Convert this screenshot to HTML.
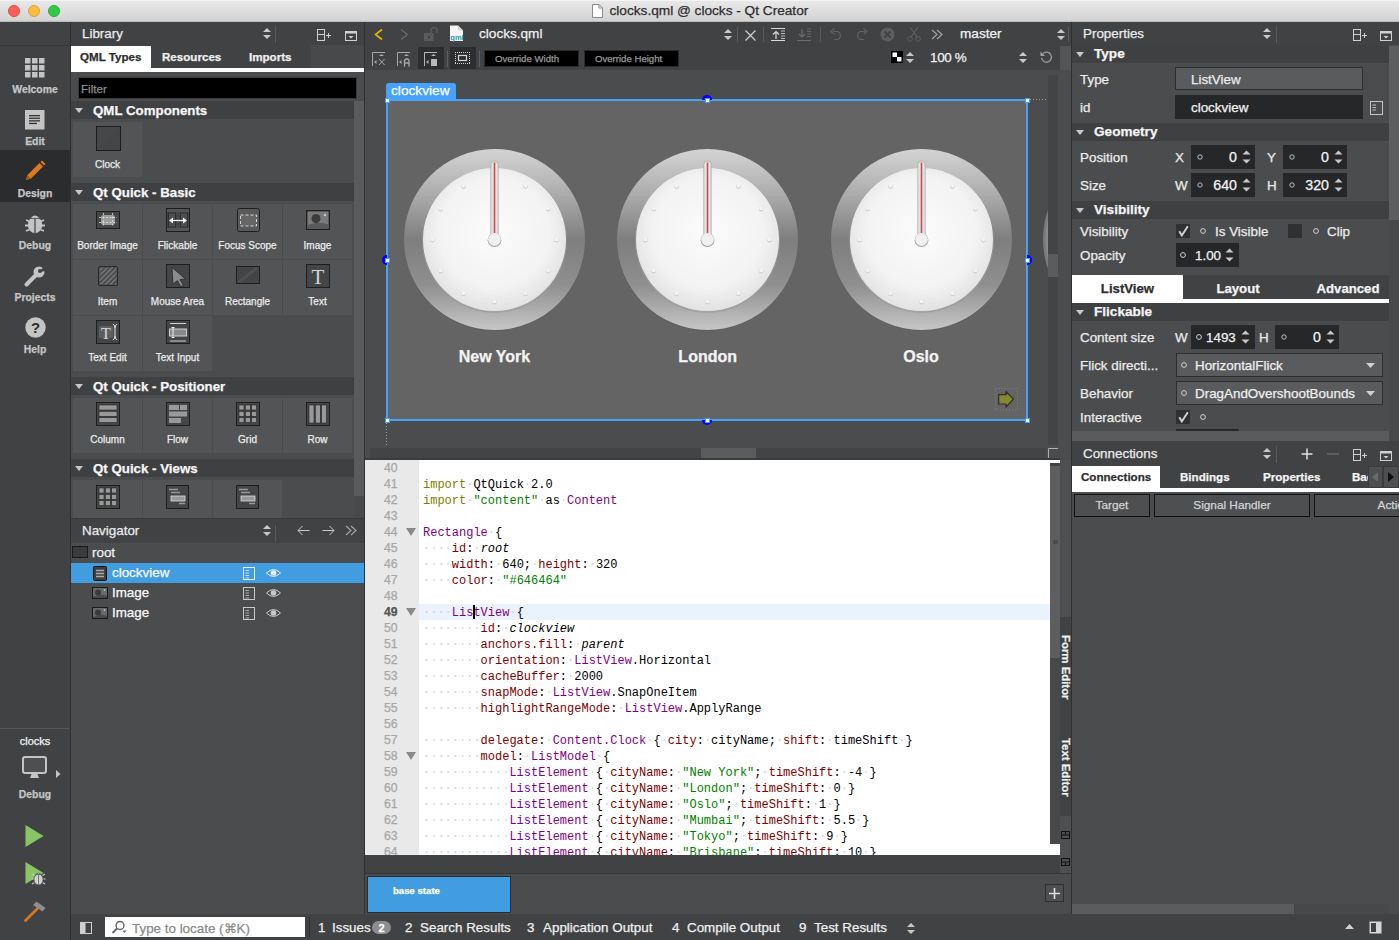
<!DOCTYPE html>
<html><head><meta charset="utf-8">
<style>
*{margin:0;padding:0;box-sizing:border-box}
html,body{width:1399px;height:940px;overflow:hidden;background:#4b4c4e;font-family:"Liberation Sans",sans-serif;color:#fff;position:relative}
.a{position:absolute}
.t{position:absolute;white-space:nowrap;line-height:1;-webkit-text-stroke:0.25px currentColor}
.mono{-webkit-text-stroke:0}
.mono{font-family:"Liberation Mono",monospace}
svg{overflow:visible}
</style></head><body>
<div class="a" style="left:0px;top:0px;width:1399px;height:22px;background:linear-gradient(#e9e9e9,#d2d2d2);"></div>
<div class="a" style="left:0px;top:0px;width:1399px;height:1px;background:#f4f4f4;"></div>
<div class="a" style="left:0px;top:21px;width:1399px;height:1px;background:#b9b9b9;"></div>
<div class="a" style="left:8px;top:5px;width:12px;height:12px;border-radius:50%;background:#fc605b;border:0.5px solid #e0443e"></div>
<div class="a" style="left:28px;top:5px;width:12px;height:12px;border-radius:50%;background:#fdbc40;border:0.5px solid #dea236"></div>
<div class="a" style="left:48px;top:5px;width:12px;height:12px;border-radius:50%;background:#34c84a;border:0.5px solid #27aa35"></div>
<svg class="a" style="left:592px;top:4px;" width="11" height="14" viewBox="0 0 11 14"><path d="M0.5 0.5h6.5l3.5 3.5v9.5h-10z" fill="#fff" stroke="#8a8a8a"/><path d="M7 0.5v3.5h3.5" fill="none" stroke="#8a8a8a"/></svg>
<div class="t" style="left:609.5px;top:4.40px;font-size:13.65px;color:#2c2c2c;font-weight:normal;">clocks.qml @ clocks - Qt Creator</div>
<div class="a" style="left:0px;top:22px;width:70px;height:918px;background:#404244;"></div>
<div class="a" style="left:70px;top:22px;width:1px;height:918px;background:#2f3032;"></div>
<div class="a" style="left:0px;top:45px;width:70px;height:1px;background:#353638;"></div>
<div class="a" style="left:0px;top:150px;width:70px;height:52px;background:#2b2c2e;"></div>
<svg class="a" style="left:25px;top:58px;" width="20" height="20" viewBox="0 0 20 20"><rect x="0" y="0" width="5.5" height="5.5" fill="#c4c4c4"/><rect x="7" y="0" width="5.5" height="5.5" fill="#c4c4c4"/><rect x="14" y="0" width="5.5" height="5.5" fill="#c4c4c4"/><rect x="0" y="7" width="5.5" height="5.5" fill="#c4c4c4"/><rect x="7" y="7" width="5.5" height="5.5" fill="#c4c4c4"/><rect x="14" y="7" width="5.5" height="5.5" fill="#c4c4c4"/><rect x="0" y="14" width="5.5" height="5.5" fill="#c4c4c4"/><rect x="7" y="14" width="5.5" height="5.5" fill="#c4c4c4"/><rect x="14" y="14" width="5.5" height="5.5" fill="#c4c4c4"/></svg>
<div class="t" style="left:-265px;width:600px;text-align:center;top:85.16px;font-size:10.4px;color:#c6c6c6;font-weight:bold;">Welcome</div>
<svg class="a" style="left:25px;top:110px;" width="20" height="20" viewBox="0 0 20 20"><rect x="0" y="0" width="19.5" height="19.5" fill="#c4c4c4"/><rect x="4" y="5.0" width="11" height="1.3" fill="#333"/><rect x="4" y="7.6" width="11" height="1.3" fill="#333"/><rect x="4" y="10.2" width="11" height="1.3" fill="#333"/><rect x="4" y="12.8" width="8" height="1.3" fill="#333"/></svg>
<div class="t" style="left:-265px;width:600px;text-align:center;top:137.16px;font-size:10.4px;color:#c6c6c6;font-weight:bold;">Edit</div>
<svg class="a" style="left:24px;top:160px;" width="22" height="22" viewBox="0 0 22 22"><path d="M2 20 L3.5 15 L15.5 3 L19 6.5 L7 18.5 Z" fill="#dd7a1b"/><path d="M16.5 2 L18 0.5 L21.5 4 L20 5.5 Z" fill="#dd7a1b"/><path d="M2 20 L3.5 15 L7 18.5Z" fill="#a85a10"/></svg>
<div class="t" style="left:-265px;width:600px;text-align:center;top:189.16px;font-size:10.4px;color:#c6c6c6;font-weight:bold;">Design</div>
<svg class="a" style="left:24px;top:212px;" width="22" height="22" viewBox="0 0 22 22"><path d="M2 8 L5.5 9.5 M1 13.5 L4.5 13.5 M2 19 L5.5 17.5 M20 8 L16.5 9.5 M21 13.5 L17.5 13.5 M20 19 L16.5 17.5" stroke="#c4c4c4" stroke-width="1.8"/><ellipse cx="11" cy="13" rx="7.2" ry="8.2" fill="#c4c4c4"/><path d="M6 6.5 Q11 -0.5 16 6.5Z" fill="#c4c4c4" stroke="#404244" stroke-width="0.8"/><line x1="11" y1="6.5" x2="11" y2="21.5" stroke="#404244" stroke-width="1.2"/></svg>
<div class="t" style="left:-265px;width:600px;text-align:center;top:241.16px;font-size:10.4px;color:#c6c6c6;font-weight:bold;">Debug</div>
<svg class="a" style="left:24px;top:265px;" width="22" height="22" viewBox="0 0 22 22"><path d="M2.5 19.5 L12 10" stroke="#c4c4c4" stroke-width="4" stroke-linecap="round"/><circle cx="15" cy="7" r="5.5" fill="#c4c4c4"/><path d="M15 7 L20 1.5 L22 6Z" fill="#404244"/><circle cx="16" cy="6" r="2" fill="#404244"/></svg>
<div class="t" style="left:-265px;width:600px;text-align:center;top:293.16px;font-size:10.4px;color:#c6c6c6;font-weight:bold;">Projects</div>
<svg class="a" style="left:25px;top:317px;" width="21" height="21" viewBox="0 0 21 21"><circle cx="10.5" cy="10.5" r="10.2" fill="#c4c4c4"/><text x="10.5" y="16" text-anchor="middle" font-family="Liberation Sans" font-weight="bold" font-size="15" fill="#2b2c2e">?</text></svg>
<div class="t" style="left:-265px;width:600px;text-align:center;top:345.16px;font-size:10.4px;color:#c6c6c6;font-weight:bold;">Help</div>
<div class="a" style="left:0px;top:728px;width:70px;height:1px;background:#555658;"></div>
<div class="t" style="left:-265px;width:600px;text-align:center;top:735.65px;font-size:11px;color:#f4f4f4;font-weight:normal;">clocks</div>
<svg class="a" style="left:22px;top:756px;" width="26" height="24" viewBox="0 0 26 24"><rect x="1" y="1" width="23" height="16" rx="2" fill="#4e4f51" stroke="#c4c4c4" stroke-width="2"/><path d="M10 17 L15 17 L17 22 L8 22Z" fill="#c4c4c4"/></svg>
<svg class="a" style="left:56px;top:770px;" width="5" height="8" viewBox="0 0 5 8"><path d="M0 0 L4.5 4 L0 8Z" fill="#c4c4c4"/></svg>
<div class="t" style="left:-265px;width:600px;text-align:center;top:790.16px;font-size:10.4px;color:#c6c6c6;font-weight:bold;">Debug</div>
<svg class="a" style="left:25px;top:825px;" width="19" height="22" viewBox="0 0 19 22"><path d="M0.5 0 L18.5 11 L0.5 22Z" fill="#8bc466"/></svg>
<svg class="a" style="left:25px;top:862px;" width="22" height="25" viewBox="0 0 22 25"><path d="M0.5 0 L18.5 11 L0.5 22Z" fill="#8bc466"/><path d="M9.5 13.5 L7 12 M9.5 17 L6.5 17 M9.5 20.5 L7 22 M17.5 13.5 L20 12 M17.5 17 L20.5 17 M17.5 20.5 L20 22" stroke="#c8c8c8" stroke-width="1.2"/><ellipse cx="13.5" cy="17.5" rx="4.6" ry="5.5" fill="#d0d0d0" stroke="#404244" stroke-width="0.8"/><path d="M10.5 12.5 Q13.5 9.5 16.5 12.5Z" fill="#d0d0d0" stroke="#404244" stroke-width="0.6"/><line x1="13.5" y1="13" x2="13.5" y2="23" stroke="#707070" stroke-width="0.9"/></svg>
<svg class="a" style="left:23px;top:900px;" width="24" height="23" viewBox="0 0 24 23"><path d="M2.5 20.5 L14 9" stroke="#d6781f" stroke-width="2.8" stroke-linecap="round"/><path d="M10 5 L13.5 1.5 L22.5 8 L19.5 11.5 Z" fill="#8e8e8e"/></svg>
<div class="a" style="left:71px;top:22px;width:293px;height:496px;background:#4b4c4e;"></div>
<div class="a" style="left:71px;top:22px;width:293px;height:23px;background:#404244;"></div>
<div class="t" style="left:82px;top:26.61px;font-size:13.4px;color:#ececec;font-weight:normal;">Library</div>
<svg class="a" style="left:263px;top:28px;" width="8" height="11" viewBox="0 0 8 11"><path d="M4 0 L8 4 L0 4Z M4 11 L8 7 L0 7Z" fill="#c8c8c8"/></svg>
<div class="a" style="left:275px;top:26px;width:1px;height:17px;background:#5a5b5d;"></div>
<svg class="a" style="left:317px;top:29px;" width="15" height="12" viewBox="0 0 15 12"><rect x="0.5" y="0.5" width="7" height="11" fill="none" stroke="#d0d0d0"/><line x1="0.5" y1="5.5" x2="7.5" y2="5.5" stroke="#d0d0d0"/><path d="M9 6.5 H14 M11.5 4 V9" stroke="#d0d0d0" stroke-width="1"/></svg>
<svg class="a" style="left:345px;top:31px;" width="12" height="10" viewBox="0 0 12 10"><rect x="0.5" y="0.5" width="11" height="9" fill="none" stroke="#d0d0d0"/><rect x="0.5" y="0.5" width="11" height="2" fill="#d0d0d0"/><path d="M3.5 5 L8.5 5 L6 7.5Z" fill="#d0d0d0"/></svg>
<div class="a" style="left:71px;top:45px;width:293px;height:23px;background:#404244;"></div>
<div class="a" style="left:71px;top:46px;width:80px;height:22px;background:#ffffff;"></div>
<div class="a" style="left:71px;top:68px;width:293px;height:4px;background:#ffffff;"></div>
<div class="a" style="left:311px;top:45px;width:53px;height:23px;background:#48494b;"></div>
<div class="t" style="left:80px;top:51.14px;font-size:11.6px;color:#2e2e2e;font-weight:bold;">QML Types</div>
<div class="t" style="left:162px;top:51.14px;font-size:11.6px;color:#f0f0f0;font-weight:bold;">Resources</div>
<div class="t" style="left:249px;top:51.14px;font-size:11.6px;color:#f0f0f0;font-weight:bold;">Imports</div>
<div class="a" style="left:71px;top:72px;width:293px;height:29px;background:#4b4c4e;"></div>
<div class="a" style="left:78px;top:77px;width:279px;height:22px;background:#000;border:1px solid #3a3a3a;"></div>
<div class="t" style="left:81px;top:83.14px;font-size:11.6px;color:#8f8f8f;font-weight:normal;">Filter</div>
<div class="a" style="left:354px;top:101px;width:10px;height:417px;background:#5a5b5d;"></div>
<div class="a" style="left:354px;top:496px;width:10px;height:22px;background:#48494b;"></div>
<div class="a" style="left:364px;top:22px;width:1px;height:918px;background:#2f3032;"></div>
<div class="a" style="left:71px;top:101px;width:283px;height:18px;background:#3f4042;"></div>
<svg class="a" style="left:75px;top:108px;" width="8" height="5" viewBox="0 0 8 5"><path d="M0 0 L8 0 L4.0 5Z" fill="#c8c8c8"/></svg>
<div class="t" style="left:93px;top:103.50px;font-size:13.3px;color:#f6f6f6;font-weight:bold;">QML Components</div>
<div class="a" style="left:71px;top:183px;width:283px;height:18px;background:#3f4042;"></div>
<svg class="a" style="left:75px;top:190px;" width="8" height="5" viewBox="0 0 8 5"><path d="M0 0 L8 0 L4.0 5Z" fill="#c8c8c8"/></svg>
<div class="t" style="left:93px;top:185.50px;font-size:13.3px;color:#f6f6f6;font-weight:bold;">Qt Quick - Basic</div>
<div class="a" style="left:71px;top:377px;width:283px;height:18px;background:#3f4042;"></div>
<svg class="a" style="left:75px;top:384px;" width="8" height="5" viewBox="0 0 8 5"><path d="M0 0 L8 0 L4.0 5Z" fill="#c8c8c8"/></svg>
<div class="t" style="left:93px;top:379.50px;font-size:13.3px;color:#f6f6f6;font-weight:bold;">Qt Quick - Positioner</div>
<div class="a" style="left:71px;top:459px;width:283px;height:18px;background:#3f4042;"></div>
<svg class="a" style="left:75px;top:466px;" width="8" height="5" viewBox="0 0 8 5"><path d="M0 0 L8 0 L4.0 5Z" fill="#c8c8c8"/></svg>
<div class="t" style="left:93px;top:461.50px;font-size:13.3px;color:#f6f6f6;font-weight:bold;">Qt Quick - Views</div>
<div class="a" style="left:73px;top:122px;width:69px;height:55px;background:#535456;"></div>
<svg class="a" style="left:96px;top:126px;" width="25" height="25" viewBox="0 0 25 25"><rect x="0.5" y="0.5" width="24" height="24" fill="#464749" stroke="#1c1c1c"/><path d="M1 24 L24 1 V24Z" fill="#444547"/></svg>
<div class="t" style="left:-192.5px;width:600px;text-align:center;top:159.50px;font-size:10px;color:#ececec;font-weight:normal;">Clock</div>
<div class="a" style="left:73px;top:204px;width:69px;height:55px;background:#535456;"></div>
<div class="t" style="left:-192.5px;width:600px;text-align:center;top:240.80px;font-size:10px;color:#ececec;font-weight:normal;">Border Image</div>
<div class="a" style="left:143px;top:204px;width:69px;height:55px;background:#535456;"></div>
<div class="t" style="left:-122.5px;width:600px;text-align:center;top:240.80px;font-size:10px;color:#ececec;font-weight:normal;">Flickable</div>
<div class="a" style="left:213px;top:204px;width:69px;height:55px;background:#535456;"></div>
<div class="t" style="left:-52.5px;width:600px;text-align:center;top:240.80px;font-size:10px;color:#ececec;font-weight:normal;">Focus Scope</div>
<div class="a" style="left:283px;top:204px;width:69px;height:55px;background:#535456;"></div>
<div class="t" style="left:17.5px;width:600px;text-align:center;top:240.80px;font-size:10px;color:#ececec;font-weight:normal;">Image</div>
<div class="a" style="left:73px;top:260px;width:69px;height:55px;background:#535456;"></div>
<div class="t" style="left:-192.5px;width:600px;text-align:center;top:296.80px;font-size:10px;color:#ececec;font-weight:normal;">Item</div>
<div class="a" style="left:143px;top:260px;width:69px;height:55px;background:#535456;"></div>
<div class="t" style="left:-122.5px;width:600px;text-align:center;top:296.80px;font-size:10px;color:#ececec;font-weight:normal;">Mouse Area</div>
<div class="a" style="left:213px;top:260px;width:69px;height:55px;background:#535456;"></div>
<div class="t" style="left:-52.5px;width:600px;text-align:center;top:296.80px;font-size:10px;color:#ececec;font-weight:normal;">Rectangle</div>
<div class="a" style="left:283px;top:260px;width:69px;height:55px;background:#535456;"></div>
<div class="t" style="left:17.5px;width:600px;text-align:center;top:296.80px;font-size:10px;color:#ececec;font-weight:normal;">Text</div>
<div class="a" style="left:73px;top:316px;width:69px;height:55px;background:#535456;"></div>
<div class="t" style="left:-192.5px;width:600px;text-align:center;top:352.80px;font-size:10px;color:#ececec;font-weight:normal;">Text Edit</div>
<div class="a" style="left:143px;top:316px;width:69px;height:55px;background:#535456;"></div>
<div class="t" style="left:-122.5px;width:600px;text-align:center;top:352.80px;font-size:10px;color:#ececec;font-weight:normal;">Text Input</div>
<svg class="a" style="left:96px;top:211px;" width="24" height="18" viewBox="0 0 24 18"><rect x="0.5" y="0.5" width="23" height="17" fill="#444547" stroke="#1e1e1e"/><rect x="5" y="4" width="14" height="10" rx="2.5" fill="#9c9c9c"/><path d="M3 6.5H21 M3 11.5H21 M7.5 2V16 M16.5 2V16" stroke="#e0e0e0" stroke-width="0.8" stroke-dasharray="2 1.5"/></svg>
<svg class="a" style="left:166px;top:208px;" width="24" height="24" viewBox="0 0 24 24"><rect x="0.5" y="0.5" width="23" height="23" fill="#444547" stroke="#1e1e1e"/><rect x="1" y="1" width="22" height="3" fill="#555"/><rect x="1" y="20" width="22" height="3" fill="#555"/><rect x="2.5" y="5" width="7" height="14" fill="#4e4f51" stroke="#2a2a2a" stroke-width="0.8"/><rect x="14.5" y="5" width="7" height="14" fill="#4e4f51" stroke="#2a2a2a" stroke-width="0.8"/><path d="M4.5 12.5H19.5" stroke="#f0f0f0" stroke-width="1.3"/><path d="M3 12.5 L7 9.5 L7 15.5Z M21 12.5 L17 9.5 L17 15.5Z" fill="#f0f0f0"/></svg>
<svg class="a" style="left:237px;top:208px;" width="23" height="24" viewBox="0 0 23 24"><rect x="0.5" y="0.5" width="22" height="23" rx="2" fill="#58595b" stroke="#1e1e1e"/><rect x="3.5" y="7" width="16" height="11" fill="#666" stroke="#d8d8d8" stroke-width="1" stroke-dasharray="3 2"/></svg>
<svg class="a" style="left:306px;top:210px;" width="24" height="20" viewBox="0 0 24 20"><rect x="0.5" y="0.5" width="23" height="19" fill="#3a3b3d" stroke="#1e1e1e"/><rect x="1.5" y="1.5" width="21" height="17" fill="#7a7a7a"/><circle cx="10" cy="8.5" r="4.5" fill="#3c3c3c"/><rect x="9.3" y="11" width="1.6" height="5" fill="#3c3c3c"/><path d="M1.5 15 Q12 11.5 22.5 14.5 V18.5 H1.5Z" fill="#5a5a5a"/><circle cx="19" cy="5" r="1.2" fill="#c8c8c8"/></svg>
<svg class="a" style="left:98px;top:266px;" width="20" height="20" viewBox="0 0 20 20"><defs><pattern id="hat" width="3.5" height="3.5" patternUnits="userSpaceOnUse" patternTransform="rotate(45)"><rect width="1.5" height="3.5" fill="#7a7a7a"/></pattern></defs><rect x="0.5" y="0.5" width="19" height="19" rx="1.5" fill="#4a4b4d" stroke="#2a2a2a"/><rect x="1.5" y="1.5" width="17" height="17" fill="url(#hat)"/></svg>
<svg class="a" style="left:166px;top:264px;" width="24" height="24" viewBox="0 0 24 24"><rect x="0.5" y="0.5" width="23" height="23" fill="#444547" stroke="#1e1e1e"/><path d="M6 3.5 L19.5 15 L14 15.5 L17.5 21.5 L14.5 22.5 L11.5 16.5 L7 20Z" fill="#8c8c8c" stroke="#2a2a2a" stroke-width="0.8"/></svg>
<svg class="a" style="left:236px;top:266px;" width="24" height="18" viewBox="0 0 24 18"><rect x="0.5" y="0.5" width="23" height="17" fill="#444547" stroke="#1e1e1e"/><path d="M3 16 L21 2" stroke="#4f5052" stroke-width="3"/></svg>
<svg class="a" style="left:306px;top:264px;" width="24" height="24" viewBox="0 0 24 24"><rect x="0.5" y="0.5" width="23" height="23" fill="#444547" stroke="#1e1e1e"/><text x="12" y="20" text-anchor="middle" font-family="Liberation Serif" font-size="21" fill="#d4d4d4">T</text></svg>
<svg class="a" style="left:96px;top:320px;" width="24" height="24" viewBox="0 0 24 24"><rect x="0.5" y="0.5" width="23" height="23" fill="#444547" stroke="#1e1e1e"/><rect x="3" y="6" width="14" height="12" fill="#5e5f61"/><text x="10" y="19" text-anchor="middle" font-family="Liberation Serif" font-size="16" fill="#d4d4d4">T</text><path d="M17 4 Q19 5.5 19 8 V16 Q19 18.5 17 20 M21 4 Q19 5.5 19 8 M19 16 Q19 18.5 21 20" stroke="#eee" fill="none" stroke-width="1"/></svg>
<svg class="a" style="left:166px;top:320px;" width="24" height="24" viewBox="0 0 24 24"><rect x="0.5" y="0.5" width="23" height="23" fill="#444547" stroke="#1e1e1e"/><path d="M4 3.5H20 M4 21H20" stroke="#cfcfcf" stroke-width="1"/><rect x="3.5" y="9" width="17" height="7" fill="#8a8a8a" stroke="#cfcfcf" stroke-width="1"/><path d="M7 7.5V17.5 M5.5 7.5H8.5 M5.5 17.5H8.5" stroke="#f0f0f0" stroke-width="1"/></svg>
<div class="a" style="left:73px;top:398px;width:69px;height:55px;background:#535456;"></div>
<div class="t" style="left:-192.5px;width:600px;text-align:center;top:434.80px;font-size:10px;color:#ececec;font-weight:normal;">Column</div>
<div class="a" style="left:143px;top:398px;width:69px;height:55px;background:#535456;"></div>
<div class="t" style="left:-122.5px;width:600px;text-align:center;top:434.80px;font-size:10px;color:#ececec;font-weight:normal;">Flow</div>
<div class="a" style="left:213px;top:398px;width:69px;height:55px;background:#535456;"></div>
<div class="t" style="left:-52.5px;width:600px;text-align:center;top:434.80px;font-size:10px;color:#ececec;font-weight:normal;">Grid</div>
<div class="a" style="left:283px;top:398px;width:69px;height:55px;background:#535456;"></div>
<div class="t" style="left:17.5px;width:600px;text-align:center;top:434.80px;font-size:10px;color:#ececec;font-weight:normal;">Row</div>
<svg class="a" style="left:96px;top:402px;" width="24" height="24" viewBox="0 0 24 24"><rect x="0.5" y="0.5" width="23" height="23" fill="#444547" stroke="#1e1e1e"/><rect x="3" y="3.0" width="18" height="5" fill="#999" stroke="#222" stroke-width="0.6"/><rect x="3" y="9.3" width="18" height="5" fill="#999" stroke="#222" stroke-width="0.6"/><rect x="3" y="15.6" width="18" height="5" fill="#999" stroke="#222" stroke-width="0.6"/></svg>
<svg class="a" style="left:166px;top:402px;" width="24" height="24" viewBox="0 0 24 24"><rect x="0.5" y="0.5" width="23" height="23" fill="#444547" stroke="#1e1e1e"/><rect x="3" y="3" width="10" height="5" fill="#999"/><rect x="14" y="3" width="7" height="5" fill="#999"/><rect x="3" y="9.5" width="18" height="5" fill="#999"/><rect x="3" y="16" width="12" height="5" fill="#999"/></svg>
<svg class="a" style="left:236px;top:402px;" width="24" height="24" viewBox="0 0 24 24"><rect x="0.5" y="0.5" width="23" height="23" fill="#444547" stroke="#1e1e1e"/><rect x="3.0" y="3.0" width="5" height="5" fill="#999" stroke="#222" stroke-width="0.6"/><rect x="9.3" y="3.0" width="5" height="5" fill="#999" stroke="#222" stroke-width="0.6"/><rect x="15.6" y="3.0" width="5" height="5" fill="#999" stroke="#222" stroke-width="0.6"/><rect x="3.0" y="9.3" width="5" height="5" fill="#999" stroke="#222" stroke-width="0.6"/><rect x="9.3" y="9.3" width="5" height="5" fill="#999" stroke="#222" stroke-width="0.6"/><rect x="15.6" y="9.3" width="5" height="5" fill="#999" stroke="#222" stroke-width="0.6"/><rect x="3.0" y="15.6" width="5" height="5" fill="#999" stroke="#222" stroke-width="0.6"/><rect x="9.3" y="15.6" width="5" height="5" fill="#999" stroke="#222" stroke-width="0.6"/><rect x="15.6" y="15.6" width="5" height="5" fill="#999" stroke="#222" stroke-width="0.6"/></svg>
<svg class="a" style="left:306px;top:402px;" width="24" height="24" viewBox="0 0 24 24"><rect x="0.5" y="0.5" width="23" height="23" fill="#444547" stroke="#1e1e1e"/><rect x="3.0" y="3" width="5" height="18" fill="#999" stroke="#222" stroke-width="0.6"/><rect x="9.3" y="3" width="5" height="18" fill="#999" stroke="#222" stroke-width="0.6"/><rect x="15.6" y="3" width="5" height="18" fill="#999" stroke="#222" stroke-width="0.6"/></svg>
<div class="a" style="left:73px;top:480px;width:69px;height:38px;background:#535456;"></div>
<div class="a" style="left:143px;top:480px;width:69px;height:38px;background:#535456;"></div>
<div class="a" style="left:213px;top:480px;width:69px;height:38px;background:#535456;"></div>
<svg class="a" style="left:96px;top:485px;" width="24" height="24" viewBox="0 0 24 24"><rect x="0.5" y="0.5" width="23" height="23" fill="#444547" stroke="#1e1e1e"/><rect x="3.0" y="3.0" width="5" height="5" fill="#999" stroke="#222" stroke-width="0.6"/><rect x="9.3" y="3.0" width="5" height="5" fill="#999" stroke="#222" stroke-width="0.6"/><rect x="15.6" y="3.0" width="5" height="5" fill="#999" stroke="#222" stroke-width="0.6"/><rect x="3.0" y="9.3" width="5" height="5" fill="#999" stroke="#222" stroke-width="0.6"/><rect x="9.3" y="9.3" width="5" height="5" fill="#999" stroke="#222" stroke-width="0.6"/><rect x="15.6" y="9.3" width="5" height="5" fill="#999" stroke="#222" stroke-width="0.6"/><rect x="3.0" y="15.6" width="5" height="5" fill="#999" stroke="#222" stroke-width="0.6"/><rect x="9.3" y="15.6" width="5" height="5" fill="#999" stroke="#222" stroke-width="0.6"/><rect x="15.6" y="15.6" width="5" height="5" fill="#999" stroke="#222" stroke-width="0.6"/></svg>
<svg class="a" style="left:166px;top:485px;" width="23" height="24" viewBox="0 0 23 24"><rect x="0.5" y="0.5" width="22" height="23" fill="#444547" stroke="#1e1e1e"/><path d="M3 4.5H12 M5 7.5H14 M13 18.5H19" stroke="#999" stroke-width="1.6"/><rect x="5" y="11" width="14" height="5" fill="#999" stroke="#ddd" stroke-width="0.8"/></svg>
<svg class="a" style="left:236px;top:485px;" width="23" height="24" viewBox="0 0 23 24"><rect x="0.5" y="0.5" width="22" height="23" fill="#444547" stroke="#1e1e1e"/><path d="M3 4.5H12 M5 7.5H14 M13 18.5H19" stroke="#999" stroke-width="1.6"/><rect x="5" y="11" width="14" height="5" fill="#999" stroke="#ddd" stroke-width="0.8"/></svg>
<div class="a" style="left:71px;top:518px;width:293px;height:396px;background:#4b4c4e;"></div>
<div class="a" style="left:71px;top:518px;width:293px;height:25px;background:#404244;"></div>
<div class="a" style="left:71px;top:518px;width:293px;height:1px;background:#38393b;"></div>
<div class="t" style="left:82px;top:524.11px;font-size:13.4px;color:#ececec;font-weight:normal;">Navigator</div>
<svg class="a" style="left:263px;top:525px;" width="8" height="11" viewBox="0 0 8 11"><path d="M4 0 L8 4 L0 4Z M4 11 L8 7 L0 7Z" fill="#c8c8c8"/></svg>
<div class="a" style="left:275px;top:525px;width:1px;height:17px;background:#5a5b5d;"></div>
<svg class="a" style="left:297px;top:525px;" width="13" height="11" viewBox="0 0 13 11"><path d="M12.5 5.5H1 M5.5 1 L1 5.5 L5.5 10" stroke="#c8c8c8" fill="none" stroke-width="1"/></svg>
<svg class="a" style="left:322px;top:525px;" width="13" height="11" viewBox="0 0 13 11"><path d="M0.5 5.5H12 M7.5 1 L12 5.5 L7.5 10" stroke="#c8c8c8" fill="none" stroke-width="1"/></svg>
<svg class="a" style="left:345px;top:526px;" width="15" height="10" viewBox="0 0 15 10"><path d="M1 9 L6 4.5 L1 0 M6 9 L11 4.5 L6 0" stroke="#a8a8a8" fill="none" stroke-width="1.1"/></svg>
<svg class="a" style="left:72px;top:546px;" width="16" height="12" viewBox="0 0 16 12"><rect x="0.5" y="0.5" width="15" height="11" fill="#3a3b3d" stroke="#1b1b1b"/></svg>
<div class="t" style="left:92px;top:545.81px;font-size:13.4px;color:#f0f0f0;font-weight:normal;">root</div>
<div class="a" style="left:71px;top:563px;width:293px;height:20px;background:#419ddf;"></div>
<svg class="a" style="left:93px;top:566px;" width="14" height="15" viewBox="0 0 14 15"><rect x="0.5" y="0.5" width="13" height="14" rx="1" fill="#3d3e40" stroke="#111"/><path d="M3 4.5H11 M3 7.5H11 M3 10.5H11" stroke="#aaa" stroke-width="1.4"/></svg>
<div class="t" style="left:112px;top:565.81px;font-size:13.4px;color:#fafafa;font-weight:normal;">clockview</div>
<svg class="a" style="left:243px;top:567px;" width="12" height="13" viewBox="0 0 12 13"><rect x="0.5" y="0.5" width="11" height="12" fill="none" stroke="#e6f1fb"/><path d="M2.5 3.5H6 M2.5 6H6 M2.5 8.5H6 M2.5 11H6" stroke="#e6f1fb" stroke-width="0.8"/></svg>
<svg class="a" style="left:266px;top:568px;" width="15" height="10" viewBox="0 0 15 10"><path d="M0.5 5 Q7.5 -2 14.5 5 Q7.5 12 0.5 5Z" fill="none" stroke="#e6f1fb" stroke-width="1"/><circle cx="7.5" cy="5" r="2.8" fill="#e6f1fb"/></svg>
<svg class="a" style="left:92px;top:587px;" width="16" height="12" viewBox="0 0 16 12"><rect x="0.5" y="0.5" width="15" height="11" fill="#6a6a6a" stroke="#1a1a1a"/><circle cx="6" cy="5.5" r="3" fill="#3a3a3a"/><path d="M1 10 Q8 6 15 9 V11 H1Z" fill="#4a4a4a"/><circle cx="12.5" cy="3" r="0.8" fill="#ddd"/></svg>
<div class="t" style="left:112px;top:585.81px;font-size:13.4px;color:#fafafa;font-weight:normal;">Image</div>
<svg class="a" style="left:243px;top:587px;" width="12" height="13" viewBox="0 0 12 13"><rect x="0.5" y="0.5" width="11" height="12" fill="none" stroke="#c8c8c8"/><path d="M2.5 3.5H6 M2.5 6H6 M2.5 8.5H6 M2.5 11H6" stroke="#c8c8c8" stroke-width="0.8"/></svg>
<svg class="a" style="left:266px;top:588px;" width="15" height="10" viewBox="0 0 15 10"><path d="M0.5 5 Q7.5 -2 14.5 5 Q7.5 12 0.5 5Z" fill="none" stroke="#c8c8c8" stroke-width="1"/><circle cx="7.5" cy="5" r="2.8" fill="#c8c8c8"/></svg>
<svg class="a" style="left:92px;top:607px;" width="16" height="12" viewBox="0 0 16 12"><rect x="0.5" y="0.5" width="15" height="11" fill="#6a6a6a" stroke="#1a1a1a"/><circle cx="6" cy="5.5" r="3" fill="#3a3a3a"/><path d="M1 10 Q8 6 15 9 V11 H1Z" fill="#4a4a4a"/><circle cx="12.5" cy="3" r="0.8" fill="#ddd"/></svg>
<div class="t" style="left:112px;top:605.81px;font-size:13.4px;color:#fafafa;font-weight:normal;">Image</div>
<svg class="a" style="left:243px;top:607px;" width="12" height="13" viewBox="0 0 12 13"><rect x="0.5" y="0.5" width="11" height="12" fill="none" stroke="#c8c8c8"/><path d="M2.5 3.5H6 M2.5 6H6 M2.5 8.5H6 M2.5 11H6" stroke="#c8c8c8" stroke-width="0.8"/></svg>
<svg class="a" style="left:266px;top:608px;" width="15" height="10" viewBox="0 0 15 10"><path d="M0.5 5 Q7.5 -2 14.5 5 Q7.5 12 0.5 5Z" fill="none" stroke="#c8c8c8" stroke-width="1"/><circle cx="7.5" cy="5" r="2.8" fill="#c8c8c8"/></svg>
<div class="a" style="left:365px;top:22px;width:706px;height:24px;background:#404244;"></div>
<svg class="a" style="left:374px;top:29px;" width="9" height="11" viewBox="0 0 9 11"><path d="M8 0.5 L1.5 5.5 L8 10.5" stroke="#e8b400" stroke-width="1.6" fill="none"/></svg>
<svg class="a" style="left:400px;top:29px;" width="9" height="11" viewBox="0 0 9 11"><path d="M1 0.5 L7.5 5.5 L1 10.5" stroke="#6a6a6a" stroke-width="1.3" fill="none"/></svg>
<svg class="a" style="left:424px;top:27px;" width="14" height="14" viewBox="0 0 14 14"><rect x="0" y="6" width="9.5" height="8" fill="#5a5b5d"/><path d="M7 6 V3.5 A3 3 0 0 1 13 3.5 V6" stroke="#5a5b5d" stroke-width="1.5" fill="none"/><rect x="4" y="9" width="2" height="2.5" fill="#404244"/></svg>
<svg class="a" style="left:449px;top:25px;" width="16" height="17" viewBox="0 0 16 17"><path d="M1 0.5 H9 L14 5.5 V16 H1Z" fill="#f4f4f4"/><path d="M9 0.5 V5.5 H14" fill="#d8d8d8"/><text x="8" y="15" text-anchor="middle" font-family="Liberation Sans" font-weight="bold" font-size="7.5" fill="#1e9bb0">qml</text></svg>
<div class="t" style="left:479px;top:26.94px;font-size:13.6px;color:#f2f2f2;font-weight:normal;">clocks.qml</div>
<svg class="a" style="left:724px;top:29px;" width="8" height="11" viewBox="0 0 8 11"><path d="M4 0 L8 4 L0 4Z M4 11 L8 7 L0 7Z" fill="#c8c8c8"/></svg>
<div class="a" style="left:737px;top:27px;width:1px;height:15px;background:#5a5b5d;"></div>
<svg class="a" style="left:745px;top:30px;" width="11" height="11" viewBox="0 0 11 11"><path d="M0.5 0.5 L10.5 10.5 M10.5 0.5 L0.5 10.5" stroke="#d0d0d0" stroke-width="1.2"/></svg>
<div class="a" style="left:763px;top:27px;width:1px;height:15px;background:#5a5b5d;"></div>
<svg class="a" style="left:771px;top:28px;" width="15" height="13" viewBox="0 0 15 13"><path d="M0 0.5H14 M0 12.5H14" stroke="#d8d8d8"/><path d="M5 11 V4 M2 6.5 L5 3.5 L8 6.5" stroke="#d8d8d8" fill="none" stroke-width="1.2"/><path d="M10 3H14 M10 5.5H14 M10 8H14 M10 10.5H14" stroke="#d8d8d8" stroke-width="0.8"/></svg>
<svg class="a" style="left:797px;top:28px;" width="15" height="13" viewBox="0 0 15 13"><path d="M0 12.5H14" stroke="#6e6e6e"/><path d="M5 1 V9 M2 6 L5 9 L8 6" stroke="#6e6e6e" fill="none" stroke-width="1.2"/><path d="M10 1H14 M10 3.5H14 M10 6H14 M10 8.5H14" stroke="#6e6e6e" stroke-width="0.8"/></svg>
<div class="a" style="left:820px;top:27px;width:1px;height:15px;background:#5a5b5d;"></div>
<svg class="a" style="left:830px;top:28px;" width="13" height="12" viewBox="0 0 13 12"><path d="M3 3.5 H8 A4.5 4.5 0 0 1 8 11.5 H4" stroke="#626262" fill="none" stroke-width="1.2"/><path d="M4.5 0.5 L1 3.5 L4.5 6.5" stroke="#626262" fill="none" stroke-width="1.2"/></svg>
<svg class="a" style="left:855px;top:28px;" width="13" height="12" viewBox="0 0 13 12"><path d="M10 3.5 H5 A4.5 4.5 0 0 0 5 11.5 H9" stroke="#626262" fill="none" stroke-width="1.2"/><path d="M8.5 0.5 L12 3.5 L8.5 6.5" stroke="#626262" fill="none" stroke-width="1.2"/></svg>
<svg class="a" style="left:880px;top:27px;" width="15" height="15" viewBox="0 0 15 15"><circle cx="7.5" cy="7.5" r="7" fill="#5e5e5e"/><path d="M4.5 4.5 L10.5 10.5 M10.5 4.5 L4.5 10.5" stroke="#404244" stroke-width="1.8"/></svg>
<svg class="a" style="left:907px;top:27px;" width="14" height="15" viewBox="0 0 14 15"><path d="M3 0 L10 10 M11 0 L4 10" stroke="#5e5e5e" stroke-width="1.2"/><circle cx="3" cy="12" r="2.3" fill="none" stroke="#5e5e5e"/><circle cx="11" cy="12" r="2.3" fill="none" stroke="#5e5e5e"/></svg>
<svg class="a" style="left:931px;top:30px;" width="15" height="10" viewBox="0 0 15 10"><path d="M1 9 L6 4.5 L1 0 M6 9 L11 4.5 L6 0" stroke="#a8a8a8" fill="none" stroke-width="1.1"/></svg>
<div class="t" style="left:960px;top:26.94px;font-size:13.6px;color:#f2f2f2;font-weight:normal;">master</div>
<svg class="a" style="left:1057px;top:29px;" width="8" height="11" viewBox="0 0 8 11"><path d="M4 0 L8 4 L0 4Z M4 11 L8 7 L0 7Z" fill="#c8c8c8"/></svg>
<div class="a" style="left:1068px;top:27px;width:1px;height:15px;background:#5a5b5d;"></div>
<div class="a" style="left:365px;top:46px;width:695px;height:24px;background:#404244;"></div>
<div class="a" style="left:1060px;top:46px;width:11px;height:24px;background:#545557;"></div>
<div class="a" style="left:418px;top:47px;width:26px;height:22px;background:#2d2e30;"></div>
<div class="a" style="left:450px;top:47px;width:26px;height:22px;background:#2d2e30;"></div>
<div class="a" style="left:447px;top:51px;width:1px;height:16px;background:#5e5f61;"></div>
<div class="a" style="left:479px;top:51px;width:1px;height:16px;background:#5e5f61;"></div>
<svg class="a" style="left:372px;top:52px;" width="14" height="15" viewBox="0 0 14 15"><path d="M0.5 14 V0.5 H13" stroke="#a8a8a8" fill="none"/><path d="M4.5 8 L2 10 L4.5 12Z" fill="#a8a8a8"/><path d="M9.5 2 L12 4 L7 4Z" fill="#a8a8a8"/><path d="M7 7 L12.5 13 M12.5 7 L7 13" stroke="#a8a8a8"/></svg>
<svg class="a" style="left:397px;top:52px;" width="14" height="15" viewBox="0 0 14 15"><path d="M0.5 14 V0.5 H13" stroke="#a8a8a8" fill="none"/><path d="M4.5 8 L2 10 L4.5 12Z" fill="#a8a8a8"/><path d="M9.5 2 L12 4 L7 4Z" fill="#a8a8a8"/><path d="M7.5 14.5 V9 Q7.5 7 9.75 7 Q12 7 12 9 V14.5 M7.5 11 H12" stroke="#a8a8a8" fill="none" stroke-width="1.3"/></svg>
<svg class="a" style="left:424px;top:52px;" width="14" height="15" viewBox="0 0 14 15"><path d="M0.5 14 V0.5 H13" stroke="#b8b8b8" fill="none"/><path d="M4.5 8 L2 10 L4.5 12Z" fill="#b8b8b8"/><path d="M9.5 2 L12 4 L7 4Z" fill="#b8b8b8"/><rect x="7" y="7" width="6" height="7" fill="#b8b8b8"/></svg>
<svg class="a" style="left:455px;top:52px;" width="15" height="12" viewBox="0 0 15 12"><rect x="0" y="0" width="1" height="1" fill="#d0d0d0"/><rect x="0" y="11" width="1" height="1" fill="#d0d0d0"/><rect x="2" y="0" width="1" height="1" fill="#d0d0d0"/><rect x="2" y="11" width="1" height="1" fill="#d0d0d0"/><rect x="4" y="0" width="1" height="1" fill="#d0d0d0"/><rect x="4" y="11" width="1" height="1" fill="#d0d0d0"/><rect x="6" y="0" width="1" height="1" fill="#d0d0d0"/><rect x="6" y="11" width="1" height="1" fill="#d0d0d0"/><rect x="8" y="0" width="1" height="1" fill="#d0d0d0"/><rect x="8" y="11" width="1" height="1" fill="#d0d0d0"/><rect x="10" y="0" width="1" height="1" fill="#d0d0d0"/><rect x="10" y="11" width="1" height="1" fill="#d0d0d0"/><rect x="12" y="0" width="1" height="1" fill="#d0d0d0"/><rect x="12" y="11" width="1" height="1" fill="#d0d0d0"/><rect x="14" y="0" width="1" height="1" fill="#d0d0d0"/><rect x="14" y="11" width="1" height="1" fill="#d0d0d0"/><rect x="0" y="2" width="1" height="1" fill="#d0d0d0"/><rect x="14" y="2" width="1" height="1" fill="#d0d0d0"/><rect x="0" y="4" width="1" height="1" fill="#d0d0d0"/><rect x="14" y="4" width="1" height="1" fill="#d0d0d0"/><rect x="0" y="6" width="1" height="1" fill="#d0d0d0"/><rect x="14" y="6" width="1" height="1" fill="#d0d0d0"/><rect x="0" y="8" width="1" height="1" fill="#d0d0d0"/><rect x="14" y="8" width="1" height="1" fill="#d0d0d0"/><rect x="0" y="10" width="1" height="1" fill="#d0d0d0"/><rect x="14" y="10" width="1" height="1" fill="#d0d0d0"/><rect x="3.5" y="3.5" width="8" height="5" fill="none" stroke="#d8d8d8" stroke-width="1.2"/></svg>
<div class="a" style="left:484px;top:50px;width:95px;height:17px;background:#000;border:1px solid #2a2a2a;"></div>
<div class="a" style="left:584px;top:50px;width:95px;height:17px;background:#000;border:1px solid #2a2a2a;"></div>
<div class="t" style="left:495px;top:53.84px;font-size:9.6px;color:#9a9a9a;font-weight:normal;">Override Width</div>
<div class="t" style="left:595px;top:53.84px;font-size:9.6px;color:#9a9a9a;font-weight:normal;">Override Height</div>
<svg class="a" style="left:891px;top:51px;" width="12" height="12" viewBox="0 0 12 12"><rect x="0" y="0" width="12" height="12" fill="#000"/><rect x="1.5" y="1.5" width="4.5" height="4.5" fill="#fff"/><rect x="6" y="6" width="4.5" height="4.5" fill="#fff"/></svg>
<svg class="a" style="left:906px;top:52px;" width="8" height="11" viewBox="0 0 8 11"><path d="M4 0 L8 4 L0 4Z M4 11 L8 7 L0 7Z" fill="#c8c8c8"/></svg>
<div class="t" style="left:930px;top:51.11px;font-size:13.4px;color:#f2f2f2;font-weight:normal;letter-spacing:-0.3px">100 %</div>
<svg class="a" style="left:1019px;top:52px;" width="8" height="11" viewBox="0 0 8 11"><path d="M4 0 L8 4 L0 4Z M4 11 L8 7 L0 7Z" fill="#c8c8c8"/></svg>
<svg class="a" style="left:1040px;top:51px;" width="12" height="12" viewBox="0 0 12 12"><path d="M3 2.5 A5 5 0 1 1 1.5 7" stroke="#a0a0a0" fill="none" stroke-width="1.3"/><path d="M0.5 0.5 L0.5 5 L5 5Z" fill="#a0a0a0"/></svg>
<div class="a" style="left:365px;top:70px;width:706px;height:390px;background:#4b4c4e;"></div>
<div class="a" style="left:1048px;top:75px;width:10px;height:370px;background:#434446;"></div>
<div class="a" style="left:1048px;top:254px;width:10px;height:23px;background:#5b5c5e;"></div>
<div class="a" style="left:370px;top:448px;width:676px;height:10px;background:#434446;"></div>
<div class="a" style="left:701px;top:448px;width:55px;height:10px;background:#5b5c5e;"></div>
<svg class="a" style="left:1048px;top:448px;" width="10" height="10" viewBox="0 0 10 10"><path d="M0.5 10 V0.5 H10" stroke="#b0b0b0" fill="none"/></svg>
<div class="a" style="left:365px;top:458px;width:695px;height:2px;background:#3a3b3d;"></div>
<div class="a" style="left:387px;top:100px;width:640px;height:320px;background:#646464;"></div>
<svg class="a" style="left:399.9px;top:145.0px;" width="189.0" height="189.0" viewBox="0 0 189.0 189.0"><defs>
<linearGradient id="bz" x1="0" y1="0" x2="0" y2="1">
<stop offset="0" stop-color="#d4d4d4"/><stop offset="0.25" stop-color="#acacac"/><stop offset="0.5" stop-color="#7e7e7e"/><stop offset="0.75" stop-color="#8f8f8f"/><stop offset="1" stop-color="#c6c6c6"/></linearGradient>
<radialGradient id="fc" cx="0.5" cy="0.45" r="0.55">
<stop offset="0" stop-color="#fbfbfb"/><stop offset="0.7" stop-color="#f3f3f3"/><stop offset="1" stop-color="#e2e2e2"/></radialGradient>
</defs>
<circle cx="94.5" cy="95.5" r="90.5" fill="#5a5a5a" opacity="0.5"/>
<circle cx="94.5" cy="94.5" r="90.5" fill="url(#bz)"/>
<circle cx="94.5" cy="95.5" r="72.5" fill="#9a9a9a" opacity="0.6"/>
<circle cx="94.5" cy="94.5" r="71.5" fill="url(#fc)"/>
<circle cx="125.50" cy="41.41" r="2.3" fill="#c4c4c4"/><circle cx="125.50" cy="40.81" r="2.1" fill="#f4f4f4"/><circle cx="148.19" cy="64.10" r="2.3" fill="#c4c4c4"/><circle cx="148.19" cy="63.50" r="2.1" fill="#f4f4f4"/><circle cx="156.50" cy="95.10" r="2.3" fill="#c4c4c4"/><circle cx="156.50" cy="94.50" r="2.1" fill="#f4f4f4"/><circle cx="148.19" cy="126.10" r="2.3" fill="#c4c4c4"/><circle cx="148.19" cy="125.50" r="2.1" fill="#f4f4f4"/><circle cx="125.50" cy="148.79" r="2.3" fill="#c4c4c4"/><circle cx="125.50" cy="148.19" r="2.1" fill="#f4f4f4"/><circle cx="94.50" cy="157.10" r="2.3" fill="#c4c4c4"/><circle cx="94.50" cy="156.50" r="2.1" fill="#f4f4f4"/><circle cx="63.50" cy="148.79" r="2.3" fill="#c4c4c4"/><circle cx="63.50" cy="148.19" r="2.1" fill="#f4f4f4"/><circle cx="40.81" cy="126.10" r="2.3" fill="#c4c4c4"/><circle cx="40.81" cy="125.50" r="2.1" fill="#f4f4f4"/><circle cx="32.50" cy="95.10" r="2.3" fill="#c4c4c4"/><circle cx="32.50" cy="94.50" r="2.1" fill="#f4f4f4"/><circle cx="40.81" cy="64.10" r="2.3" fill="#c4c4c4"/><circle cx="40.81" cy="63.50" r="2.1" fill="#f4f4f4"/><circle cx="63.50" cy="41.41" r="2.3" fill="#c4c4c4"/><circle cx="63.50" cy="40.81" r="2.1" fill="#f4f4f4"/>
<rect x="90.8" y="16.0" width="7.4" height="79" rx="3.5" fill="#e4e4e4" stroke="#a8a8a8" stroke-width="0.8"/>
<rect x="93.7" y="17.5" width="1.6" height="72" fill="#d04a55"/>
<circle cx="94.5" cy="95.2" r="6.9" fill="#a0a0a0"/><circle cx="94.5" cy="94.5" r="6.4" fill="#f0f0f0"/>
</svg>
<svg class="a" style="left:613.2px;top:145.0px;" width="189.0" height="189.0" viewBox="0 0 189.0 189.0"><defs>
<linearGradient id="bz" x1="0" y1="0" x2="0" y2="1">
<stop offset="0" stop-color="#d4d4d4"/><stop offset="0.25" stop-color="#acacac"/><stop offset="0.5" stop-color="#7e7e7e"/><stop offset="0.75" stop-color="#8f8f8f"/><stop offset="1" stop-color="#c6c6c6"/></linearGradient>
<radialGradient id="fc" cx="0.5" cy="0.45" r="0.55">
<stop offset="0" stop-color="#fbfbfb"/><stop offset="0.7" stop-color="#f3f3f3"/><stop offset="1" stop-color="#e2e2e2"/></radialGradient>
</defs>
<circle cx="94.5" cy="95.5" r="90.5" fill="#5a5a5a" opacity="0.5"/>
<circle cx="94.5" cy="94.5" r="90.5" fill="url(#bz)"/>
<circle cx="94.5" cy="95.5" r="72.5" fill="#9a9a9a" opacity="0.6"/>
<circle cx="94.5" cy="94.5" r="71.5" fill="url(#fc)"/>
<circle cx="125.50" cy="41.41" r="2.3" fill="#c4c4c4"/><circle cx="125.50" cy="40.81" r="2.1" fill="#f4f4f4"/><circle cx="148.19" cy="64.10" r="2.3" fill="#c4c4c4"/><circle cx="148.19" cy="63.50" r="2.1" fill="#f4f4f4"/><circle cx="156.50" cy="95.10" r="2.3" fill="#c4c4c4"/><circle cx="156.50" cy="94.50" r="2.1" fill="#f4f4f4"/><circle cx="148.19" cy="126.10" r="2.3" fill="#c4c4c4"/><circle cx="148.19" cy="125.50" r="2.1" fill="#f4f4f4"/><circle cx="125.50" cy="148.79" r="2.3" fill="#c4c4c4"/><circle cx="125.50" cy="148.19" r="2.1" fill="#f4f4f4"/><circle cx="94.50" cy="157.10" r="2.3" fill="#c4c4c4"/><circle cx="94.50" cy="156.50" r="2.1" fill="#f4f4f4"/><circle cx="63.50" cy="148.79" r="2.3" fill="#c4c4c4"/><circle cx="63.50" cy="148.19" r="2.1" fill="#f4f4f4"/><circle cx="40.81" cy="126.10" r="2.3" fill="#c4c4c4"/><circle cx="40.81" cy="125.50" r="2.1" fill="#f4f4f4"/><circle cx="32.50" cy="95.10" r="2.3" fill="#c4c4c4"/><circle cx="32.50" cy="94.50" r="2.1" fill="#f4f4f4"/><circle cx="40.81" cy="64.10" r="2.3" fill="#c4c4c4"/><circle cx="40.81" cy="63.50" r="2.1" fill="#f4f4f4"/><circle cx="63.50" cy="41.41" r="2.3" fill="#c4c4c4"/><circle cx="63.50" cy="40.81" r="2.1" fill="#f4f4f4"/>
<rect x="90.8" y="16.0" width="7.4" height="79" rx="3.5" fill="#e4e4e4" stroke="#a8a8a8" stroke-width="0.8"/>
<rect x="93.7" y="17.5" width="1.6" height="72" fill="#d04a55"/>
<circle cx="94.5" cy="95.2" r="6.9" fill="#a0a0a0"/><circle cx="94.5" cy="94.5" r="6.4" fill="#f0f0f0"/>
</svg>
<svg class="a" style="left:826.5px;top:145.0px;" width="189.0" height="189.0" viewBox="0 0 189.0 189.0"><defs>
<linearGradient id="bz" x1="0" y1="0" x2="0" y2="1">
<stop offset="0" stop-color="#d4d4d4"/><stop offset="0.25" stop-color="#acacac"/><stop offset="0.5" stop-color="#7e7e7e"/><stop offset="0.75" stop-color="#8f8f8f"/><stop offset="1" stop-color="#c6c6c6"/></linearGradient>
<radialGradient id="fc" cx="0.5" cy="0.45" r="0.55">
<stop offset="0" stop-color="#fbfbfb"/><stop offset="0.7" stop-color="#f3f3f3"/><stop offset="1" stop-color="#e2e2e2"/></radialGradient>
</defs>
<circle cx="94.5" cy="95.5" r="90.5" fill="#5a5a5a" opacity="0.5"/>
<circle cx="94.5" cy="94.5" r="90.5" fill="url(#bz)"/>
<circle cx="94.5" cy="95.5" r="72.5" fill="#9a9a9a" opacity="0.6"/>
<circle cx="94.5" cy="94.5" r="71.5" fill="url(#fc)"/>
<circle cx="125.50" cy="41.41" r="2.3" fill="#c4c4c4"/><circle cx="125.50" cy="40.81" r="2.1" fill="#f4f4f4"/><circle cx="148.19" cy="64.10" r="2.3" fill="#c4c4c4"/><circle cx="148.19" cy="63.50" r="2.1" fill="#f4f4f4"/><circle cx="156.50" cy="95.10" r="2.3" fill="#c4c4c4"/><circle cx="156.50" cy="94.50" r="2.1" fill="#f4f4f4"/><circle cx="148.19" cy="126.10" r="2.3" fill="#c4c4c4"/><circle cx="148.19" cy="125.50" r="2.1" fill="#f4f4f4"/><circle cx="125.50" cy="148.79" r="2.3" fill="#c4c4c4"/><circle cx="125.50" cy="148.19" r="2.1" fill="#f4f4f4"/><circle cx="94.50" cy="157.10" r="2.3" fill="#c4c4c4"/><circle cx="94.50" cy="156.50" r="2.1" fill="#f4f4f4"/><circle cx="63.50" cy="148.79" r="2.3" fill="#c4c4c4"/><circle cx="63.50" cy="148.19" r="2.1" fill="#f4f4f4"/><circle cx="40.81" cy="126.10" r="2.3" fill="#c4c4c4"/><circle cx="40.81" cy="125.50" r="2.1" fill="#f4f4f4"/><circle cx="32.50" cy="95.10" r="2.3" fill="#c4c4c4"/><circle cx="32.50" cy="94.50" r="2.1" fill="#f4f4f4"/><circle cx="40.81" cy="64.10" r="2.3" fill="#c4c4c4"/><circle cx="40.81" cy="63.50" r="2.1" fill="#f4f4f4"/><circle cx="63.50" cy="41.41" r="2.3" fill="#c4c4c4"/><circle cx="63.50" cy="40.81" r="2.1" fill="#f4f4f4"/>
<rect x="90.8" y="16.0" width="7.4" height="79" rx="3.5" fill="#e4e4e4" stroke="#a8a8a8" stroke-width="0.8"/>
<rect x="93.7" y="17.5" width="1.6" height="72" fill="#d04a55"/>
<circle cx="94.5" cy="95.2" r="6.9" fill="#a0a0a0"/><circle cx="94.5" cy="94.5" r="6.4" fill="#f0f0f0"/>
</svg>
<div class="t" style="left:194.39999999999998px;width:600px;text-align:center;top:349.40px;font-size:16px;color:#f4f4f4;font-weight:bold;">New York</div>
<div class="t" style="left:407.70000000000005px;width:600px;text-align:center;top:349.40px;font-size:16px;color:#f4f4f4;font-weight:bold;">London</div>
<div class="t" style="left:621.0px;width:600px;text-align:center;top:349.40px;font-size:16px;color:#f4f4f4;font-weight:bold;">Oslo</div>
<div class="a" style="left:1028px;top:140px;width:20px;height:200px;overflow:hidden">
<svg class="a" style="left:10.799999999999955px;top:5.0px" width="189" height="189"><circle cx="94.5" cy="94.5" r="90.5" fill="#7a7a7a"/><circle cx="94.5" cy="94.5" r="88" fill="#8a8a8a"/></svg>
</div>
<svg class="a" style="left:995px;top:388px;" width="24" height="23" viewBox="0 0 24 23"><rect x="0.5" y="0.5" width="22" height="21.5" fill="none" stroke="#8a8a8a" stroke-width="0.8" stroke-dasharray="1 2"/><path d="M3.7 6.7 H11 V3.5 L18.5 11.2 L11 19 V16 H3.7Z" fill="#84882f" stroke="#2e2e2e" stroke-width="1.2" stroke-linejoin="round"/></svg>
<div class="a" style="left:386px;top:99px;width:642px;height:2px;background:#47a2fc;"></div>
<div class="a" style="left:386px;top:419px;width:642px;height:2px;background:#47a2fc;"></div>
<div class="a" style="left:386px;top:99px;width:2px;height:322px;background:#47a2fc;"></div>
<div class="a" style="left:1026px;top:99px;width:2px;height:322px;background:#47a2fc;"></div>
<div class="a" style="left:386px;top:83px;width:70px;height:17px;background:#47a2fc;border-radius:3px 3px 0 0"></div>
<div class="t" style="left:391px;top:84.36px;font-size:13.7px;color:#ffffff;font-weight:normal;">clockview</div>
<svg class="a" style="left:702px;top:95px;" width="10" height="5" viewBox="0 0 10 5"><path d="M0 5 A5 5 0 0 1 10 5Z" fill="#0000ff"/></svg>
<svg class="a" style="left:702px;top:420px;" width="10" height="5" viewBox="0 0 10 5"><path d="M0 0 A5 5 0 0 0 10 0Z" fill="#0000ff"/></svg>
<svg class="a" style="left:382px;top:255px;" width="5" height="10" viewBox="0 0 5 10"><path d="M5 0 A5 5 0 0 0 5 10Z" fill="#0000ff"/></svg>
<svg class="a" style="left:1027px;top:255px;" width="5" height="10" viewBox="0 0 5 10"><path d="M0 0 A5 5 0 0 1 0 10Z" fill="#0000ff"/></svg>
<div class="a" style="left:384.5px;top:97.5px;width:5px;height:5px;background:#ffffff;border:1px solid #47a2fc;"></div>
<div class="a" style="left:704.5px;top:97.5px;width:5px;height:5px;background:#ffffff;border:1px solid #47a2fc;"></div>
<div class="a" style="left:1024.5px;top:97.5px;width:5px;height:5px;background:#ffffff;border:1px solid #47a2fc;"></div>
<div class="a" style="left:384.5px;top:257.5px;width:5px;height:5px;background:#ffffff;border:1px solid #47a2fc;"></div>
<div class="a" style="left:1024.5px;top:257.5px;width:5px;height:5px;background:#ffffff;border:1px solid #47a2fc;"></div>
<div class="a" style="left:384.5px;top:417.5px;width:5px;height:5px;background:#ffffff;border:1px solid #47a2fc;"></div>
<div class="a" style="left:704.5px;top:417.5px;width:5px;height:5px;background:#ffffff;border:1px solid #47a2fc;"></div>
<div class="a" style="left:1024.5px;top:417.5px;width:5px;height:5px;background:#ffffff;border:1px solid #47a2fc;"></div>
<svg class="a" style="left:1030px;top:99px;" width="16" height="2" viewBox="0 0 16 2"><line x1="0" y1="0.5" x2="16" y2="0.5" stroke="#9a9a9a" stroke-dasharray="1 2"/></svg>
<svg class="a" style="left:386px;top:423px;" width="2" height="24" viewBox="0 0 2 24"><line x1="0.5" y1="0" x2="0.5" y2="24" stroke="#9a9a9a" stroke-dasharray="1 2"/></svg>
<div class="a" style="left:365px;top:460px;width:685px;height:395px;background:#ffffff;"></div>
<div class="a" style="left:365px;top:460px;width:54px;height:395px;background:#e9e9e9;"></div>
<div class="a" style="left:419px;top:604px;width:631px;height:16px;background:#e9f2fd;"></div>
<div class="a" style="left:1050px;top:463px;width:10px;height:392px;background:#47484a;"></div>
<div class="a" style="left:1050px;top:463px;width:10px;height:195px;background:#5d5e60;"></div>
<div class="a" style="left:1053px;top:540px;width:5px;height:4px;background:#4a4b4d;"></div>
<div class="a" style="left:1050px;top:463px;width:10px;height:3px;background:#404244;"></div>
<div class="a" style="left:1060px;top:460px;width:11px;height:455px;background:#4e4f51;"></div>
<div class="a" style="left:1060px;top:617px;width:11px;height:199px;background:#404244;"></div>
<div class="a" style="left:1050px;top:844px;width:10px;height:11px;background:#ffffff;"></div>
<div class="a" style="left:1050px;top:460px;width:10px;height:3px;background:#ffffff;"></div>
<div class="t" style="left:1071px;top:635px;transform-origin:0 0;transform:rotate(90deg);font-size:11.4px;font-weight:bold;color:#f0f0f0">Form Editor</div>
<div class="t" style="left:1071px;top:738px;transform-origin:0 0;transform:rotate(90deg);font-size:11.4px;font-weight:bold;color:#f0f0f0">Text Editor</div>
<svg class="a" style="left:1061px;top:831px;" width="9" height="8" viewBox="0 0 9 8"><rect x="0.5" y="0.5" width="8" height="7" fill="none" stroke="#111"/><path d="M0.5 4H8.5 M4.5 0.5V4" stroke="#111"/></svg>
<svg class="a" style="left:1061px;top:858px;" width="9" height="8" viewBox="0 0 9 8"><rect x="0.5" y="0.5" width="8" height="7" fill="none" stroke="#111"/><path d="M0.5 4H8.5 M4.5 4V7.5" stroke="#111"/></svg>
<div class="a" style="left:365px;top:460px;width:685px;height:395px;overflow:hidden">
<div class="t" style="left:0px;width:32.5px;text-align:right;top:1.63px;font-size:12.2px;color:#a6a6a6;font-weight:normal">40</div>
<div class="t" style="left:0px;width:32.5px;text-align:right;top:17.63px;font-size:12.2px;color:#a6a6a6;font-weight:normal">41</div>
<div class="t mono" style="left:58px;top:18.88px;font-size:12px;"><span style="color:#808000;">import</span><span style="color:#d2d2d2">·</span><span style="color:#000000;">QtQuick</span><span style="color:#d2d2d2">·</span><span style="color:#000000;">2.0</span></div>
<div class="t" style="left:0px;width:32.5px;text-align:right;top:33.63px;font-size:12.2px;color:#a6a6a6;font-weight:normal">42</div>
<div class="t mono" style="left:58px;top:34.88px;font-size:12px;"><span style="color:#808000;">import</span><span style="color:#d2d2d2">·</span><span style="color:#008000;">"content"</span><span style="color:#d2d2d2">·</span><span style="color:#000000;">as</span><span style="color:#d2d2d2">·</span><span style="color:#800080;">Content</span></div>
<div class="t" style="left:0px;width:32.5px;text-align:right;top:49.63px;font-size:12.2px;color:#a6a6a6;font-weight:normal">43</div>
<div class="t" style="left:0px;width:32.5px;text-align:right;top:65.63px;font-size:12.2px;color:#a6a6a6;font-weight:normal">44</div>
<div class="t mono" style="left:58px;top:66.88px;font-size:12px;"><span style="color:#800080;">Rectangle</span><span style="color:#d2d2d2">·</span><span style="color:#000000;">{</span></div>
<div class="t" style="left:0px;width:32.5px;text-align:right;top:81.63px;font-size:12.2px;color:#a6a6a6;font-weight:normal">45</div>
<div class="t mono" style="left:58px;top:82.88px;font-size:12px;"><span style="color:#d2d2d2">····</span><span style="color:#800000;">id</span><span style="color:#000000;">:</span><span style="color:#d2d2d2">·</span><span style="color:#000000;font-style:italic;">root</span></div>
<div class="t" style="left:0px;width:32.5px;text-align:right;top:97.63px;font-size:12.2px;color:#a6a6a6;font-weight:normal">46</div>
<div class="t mono" style="left:58px;top:98.88px;font-size:12px;"><span style="color:#d2d2d2">····</span><span style="color:#800000;">width</span><span style="color:#000000;">:</span><span style="color:#d2d2d2">·</span><span style="color:#000000;">640</span><span style="color:#000000;">;</span><span style="color:#d2d2d2">·</span><span style="color:#800000;">height</span><span style="color:#000000;">:</span><span style="color:#d2d2d2">·</span><span style="color:#000000;">320</span></div>
<div class="t" style="left:0px;width:32.5px;text-align:right;top:113.63px;font-size:12.2px;color:#a6a6a6;font-weight:normal">47</div>
<div class="t mono" style="left:58px;top:114.88px;font-size:12px;"><span style="color:#d2d2d2">····</span><span style="color:#800000;">color</span><span style="color:#000000;">:</span><span style="color:#d2d2d2">·</span><span style="color:#008000;">"#646464"</span></div>
<div class="t" style="left:0px;width:32.5px;text-align:right;top:129.63px;font-size:12.2px;color:#a6a6a6;font-weight:normal">48</div>
<div class="t" style="left:0px;width:32.5px;text-align:right;top:145.63px;font-size:12.2px;color:#555555;font-weight:bold">49</div>
<div class="t mono" style="left:58px;top:146.88px;font-size:12px;"><span style="color:#d2d2d2">····</span><span style="color:#800080;">ListView</span><span style="color:#d2d2d2">·</span><span style="color:#000000;">{</span></div>
<div class="t" style="left:0px;width:32.5px;text-align:right;top:161.63px;font-size:12.2px;color:#a6a6a6;font-weight:normal">50</div>
<div class="t mono" style="left:58px;top:162.88px;font-size:12px;"><span style="color:#d2d2d2">········</span><span style="color:#800000;">id</span><span style="color:#000000;">:</span><span style="color:#d2d2d2">·</span><span style="color:#000000;font-style:italic;">clockview</span></div>
<div class="t" style="left:0px;width:32.5px;text-align:right;top:177.63px;font-size:12.2px;color:#a6a6a6;font-weight:normal">51</div>
<div class="t mono" style="left:58px;top:178.88px;font-size:12px;"><span style="color:#d2d2d2">········</span><span style="color:#800000;">anchors.fill</span><span style="color:#000000;">:</span><span style="color:#d2d2d2">·</span><span style="color:#000000;font-style:italic;">parent</span></div>
<div class="t" style="left:0px;width:32.5px;text-align:right;top:193.63px;font-size:12.2px;color:#a6a6a6;font-weight:normal">52</div>
<div class="t mono" style="left:58px;top:194.88px;font-size:12px;"><span style="color:#d2d2d2">········</span><span style="color:#800000;">orientation</span><span style="color:#000000;">:</span><span style="color:#d2d2d2">·</span><span style="color:#800080;">ListView</span><span style="color:#000000;">.Horizontal</span></div>
<div class="t" style="left:0px;width:32.5px;text-align:right;top:209.63px;font-size:12.2px;color:#a6a6a6;font-weight:normal">53</div>
<div class="t mono" style="left:58px;top:210.88px;font-size:12px;"><span style="color:#d2d2d2">········</span><span style="color:#800000;">cacheBuffer</span><span style="color:#000000;">:</span><span style="color:#d2d2d2">·</span><span style="color:#000000;">2000</span></div>
<div class="t" style="left:0px;width:32.5px;text-align:right;top:225.63px;font-size:12.2px;color:#a6a6a6;font-weight:normal">54</div>
<div class="t mono" style="left:58px;top:226.88px;font-size:12px;"><span style="color:#d2d2d2">········</span><span style="color:#800000;">snapMode</span><span style="color:#000000;">:</span><span style="color:#d2d2d2">·</span><span style="color:#800080;">ListView</span><span style="color:#000000;">.SnapOneItem</span></div>
<div class="t" style="left:0px;width:32.5px;text-align:right;top:241.63px;font-size:12.2px;color:#a6a6a6;font-weight:normal">55</div>
<div class="t mono" style="left:58px;top:242.88px;font-size:12px;"><span style="color:#d2d2d2">········</span><span style="color:#800000;">highlightRangeMode</span><span style="color:#000000;">:</span><span style="color:#d2d2d2">·</span><span style="color:#800080;">ListView</span><span style="color:#000000;">.ApplyRange</span></div>
<div class="t" style="left:0px;width:32.5px;text-align:right;top:257.63px;font-size:12.2px;color:#a6a6a6;font-weight:normal">56</div>
<div class="t" style="left:0px;width:32.5px;text-align:right;top:273.63px;font-size:12.2px;color:#a6a6a6;font-weight:normal">57</div>
<div class="t mono" style="left:58px;top:274.88px;font-size:12px;"><span style="color:#d2d2d2">········</span><span style="color:#800000;">delegate</span><span style="color:#000000;">:</span><span style="color:#d2d2d2">·</span><span style="color:#800080;">Content.Clock</span><span style="color:#d2d2d2">·</span><span style="color:#000000;">{</span><span style="color:#d2d2d2">·</span><span style="color:#800000;">city</span><span style="color:#000000;">:</span><span style="color:#d2d2d2">·</span><span style="color:#000000;">cityName</span><span style="color:#000000;">;</span><span style="color:#d2d2d2">·</span><span style="color:#800000;">shift</span><span style="color:#000000;">:</span><span style="color:#d2d2d2">·</span><span style="color:#000000;">timeShift</span><span style="color:#d2d2d2">·</span><span style="color:#000000;">}</span></div>
<div class="t" style="left:0px;width:32.5px;text-align:right;top:289.63px;font-size:12.2px;color:#a6a6a6;font-weight:normal">58</div>
<div class="t mono" style="left:58px;top:290.88px;font-size:12px;"><span style="color:#d2d2d2">········</span><span style="color:#800000;">model</span><span style="color:#000000;">:</span><span style="color:#d2d2d2">·</span><span style="color:#800080;">ListModel</span><span style="color:#d2d2d2">·</span><span style="color:#000000;">{</span></div>
<div class="t" style="left:0px;width:32.5px;text-align:right;top:305.63px;font-size:12.2px;color:#a6a6a6;font-weight:normal">59</div>
<div class="t mono" style="left:58px;top:306.88px;font-size:12px;"><span style="color:#d2d2d2">············</span><span style="color:#800080;">ListElement</span><span style="color:#d2d2d2">·</span><span style="color:#000000;">{</span><span style="color:#d2d2d2">·</span><span style="color:#800000;">cityName</span><span style="color:#000000;">:</span><span style="color:#d2d2d2">·</span><span style="color:#008000;">"New York"</span><span style="color:#000000;">;</span><span style="color:#d2d2d2">·</span><span style="color:#800000;">timeShift</span><span style="color:#000000;">:</span><span style="color:#d2d2d2">·</span><span style="color:#000000;">-4</span><span style="color:#d2d2d2">·</span><span style="color:#000000;">}</span></div>
<div class="t" style="left:0px;width:32.5px;text-align:right;top:321.63px;font-size:12.2px;color:#a6a6a6;font-weight:normal">60</div>
<div class="t mono" style="left:58px;top:322.88px;font-size:12px;"><span style="color:#d2d2d2">············</span><span style="color:#800080;">ListElement</span><span style="color:#d2d2d2">·</span><span style="color:#000000;">{</span><span style="color:#d2d2d2">·</span><span style="color:#800000;">cityName</span><span style="color:#000000;">:</span><span style="color:#d2d2d2">·</span><span style="color:#008000;">"London"</span><span style="color:#000000;">;</span><span style="color:#d2d2d2">·</span><span style="color:#800000;">timeShift</span><span style="color:#000000;">:</span><span style="color:#d2d2d2">·</span><span style="color:#000000;">0</span><span style="color:#d2d2d2">·</span><span style="color:#000000;">}</span></div>
<div class="t" style="left:0px;width:32.5px;text-align:right;top:337.63px;font-size:12.2px;color:#a6a6a6;font-weight:normal">61</div>
<div class="t mono" style="left:58px;top:338.88px;font-size:12px;"><span style="color:#d2d2d2">············</span><span style="color:#800080;">ListElement</span><span style="color:#d2d2d2">·</span><span style="color:#000000;">{</span><span style="color:#d2d2d2">·</span><span style="color:#800000;">cityName</span><span style="color:#000000;">:</span><span style="color:#d2d2d2">·</span><span style="color:#008000;">"Oslo"</span><span style="color:#000000;">;</span><span style="color:#d2d2d2">·</span><span style="color:#800000;">timeShift</span><span style="color:#000000;">:</span><span style="color:#d2d2d2">·</span><span style="color:#000000;">1</span><span style="color:#d2d2d2">·</span><span style="color:#000000;">}</span></div>
<div class="t" style="left:0px;width:32.5px;text-align:right;top:353.63px;font-size:12.2px;color:#a6a6a6;font-weight:normal">62</div>
<div class="t mono" style="left:58px;top:354.88px;font-size:12px;"><span style="color:#d2d2d2">············</span><span style="color:#800080;">ListElement</span><span style="color:#d2d2d2">·</span><span style="color:#000000;">{</span><span style="color:#d2d2d2">·</span><span style="color:#800000;">cityName</span><span style="color:#000000;">:</span><span style="color:#d2d2d2">·</span><span style="color:#008000;">"Mumbai"</span><span style="color:#000000;">;</span><span style="color:#d2d2d2">·</span><span style="color:#800000;">timeShift</span><span style="color:#000000;">:</span><span style="color:#d2d2d2">·</span><span style="color:#000000;">5.5</span><span style="color:#d2d2d2">·</span><span style="color:#000000;">}</span></div>
<div class="t" style="left:0px;width:32.5px;text-align:right;top:369.63px;font-size:12.2px;color:#a6a6a6;font-weight:normal">63</div>
<div class="t mono" style="left:58px;top:370.88px;font-size:12px;"><span style="color:#d2d2d2">············</span><span style="color:#800080;">ListElement</span><span style="color:#d2d2d2">·</span><span style="color:#000000;">{</span><span style="color:#d2d2d2">·</span><span style="color:#800000;">cityName</span><span style="color:#000000;">:</span><span style="color:#d2d2d2">·</span><span style="color:#008000;">"Tokyo"</span><span style="color:#000000;">;</span><span style="color:#d2d2d2">·</span><span style="color:#800000;">timeShift</span><span style="color:#000000;">:</span><span style="color:#d2d2d2">·</span><span style="color:#000000;">9</span><span style="color:#d2d2d2">·</span><span style="color:#000000;">}</span></div>
<div class="t" style="left:0px;width:32.5px;text-align:right;top:385.63px;font-size:12.2px;color:#a6a6a6;font-weight:normal">64</div>
<div class="t mono" style="left:58px;top:386.88px;font-size:12px;"><span style="color:#d2d2d2">············</span><span style="color:#800080;">ListElement</span><span style="color:#d2d2d2">·</span><span style="color:#000000;">{</span><span style="color:#d2d2d2">·</span><span style="color:#800000;">cityName</span><span style="color:#000000;">:</span><span style="color:#d2d2d2">·</span><span style="color:#008000;">"Brisbane"</span><span style="color:#000000;">;</span><span style="color:#d2d2d2">·</span><span style="color:#800000;">timeShift</span><span style="color:#000000;">:</span><span style="color:#d2d2d2">·</span><span style="color:#000000;">10</span><span style="color:#d2d2d2">·</span><span style="color:#000000;">}</span></div>
<svg class="a" style="left:41px;top:68px" width="10" height="8"><path d="M0 0 L10 0 L5 8Z" fill="#8a8a8a"/></svg>
<svg class="a" style="left:41px;top:148px" width="10" height="8"><path d="M0 0 L10 0 L5 8Z" fill="#8a8a8a"/></svg>
<svg class="a" style="left:41px;top:292px" width="10" height="8"><path d="M0 0 L10 0 L5 8Z" fill="#8a8a8a"/></svg>
</div>
<div class="a" style="left:473px;top:605px;width:1.5px;height:14px;background:#000;"></div>
<div class="a" style="left:365px;top:873px;width:706px;height:41px;background:#4b4c4e;"></div>
<div class="a" style="left:365px;top:855px;width:695px;height:18px;background:#404244;"></div>
<div class="a" style="left:365px;top:873px;width:706px;height:1px;background:#353638;"></div>
<div class="a" style="left:367px;top:876px;width:144px;height:37px;background:#419ddf;border:1px solid #2a2b2d;"></div>
<div class="t" style="left:393px;top:885.84px;font-size:9.6px;color:#ffffff;font-weight:bold;">base state</div>
<div class="a" style="left:1045px;top:884px;width:19px;height:18px;background:#4e4f51;border:1px solid #2e2f31;"></div>
<svg class="a" style="left:1048px;top:887px;" width="13" height="13" viewBox="0 0 13 13"><path d="M6.5 1V12 M1 6.5H12" stroke="#e0e0e0" stroke-width="1.6"/></svg>
<div class="a" style="left:71px;top:914px;width:1328px;height:26px;background:#404244;"></div>
<svg class="a" style="left:80px;top:922px;" width="12" height="12" viewBox="0 0 12 12"><rect x="0.5" y="0.5" width="11" height="11" fill="none" stroke="#d0d0d0"/><rect x="0.5" y="0.5" width="5" height="11" fill="#d0d0d0"/></svg>
<div class="a" style="left:105px;top:917px;width:200px;height:20px;background:#ffffff;"></div>
<svg class="a" style="left:111px;top:920px;" width="16" height="14" viewBox="0 0 16 14"><circle cx="9" cy="5.5" r="4" fill="none" stroke="#666" stroke-width="1.4"/><path d="M6 8.5 L1.5 13" stroke="#666" stroke-width="1.8"/><path d="M11.5 10.5 L15.5 10.5 L13.5 13Z" fill="#666"/></svg>
<div class="t" style="left:132px;top:921.61px;font-size:13.4px;color:#8a8a8a;font-weight:normal;">Type to locate (⌘K)</div>
<div class="a" style="left:309px;top:917px;width:1px;height:20px;background:#2e2f31;"></div>
<div class="t" style="left:318px;top:921.11px;font-size:13.4px;color:#f0f0f0;font-weight:normal;">1</div>
<div class="t" style="left:332px;top:921.11px;font-size:13.4px;color:#f0f0f0;font-weight:normal;">Issues</div>
<div class="t" style="left:405px;top:921.11px;font-size:13.4px;color:#f0f0f0;font-weight:normal;">2</div>
<div class="t" style="left:420px;top:921.11px;font-size:13.4px;color:#f0f0f0;font-weight:normal;">Search Results</div>
<div class="t" style="left:527px;top:921.11px;font-size:13.4px;color:#f0f0f0;font-weight:normal;">3</div>
<div class="t" style="left:543px;top:921.11px;font-size:13.4px;color:#f0f0f0;font-weight:normal;">Application Output</div>
<div class="t" style="left:672px;top:921.11px;font-size:13.4px;color:#f0f0f0;font-weight:normal;">4</div>
<div class="t" style="left:687px;top:921.11px;font-size:13.4px;color:#f0f0f0;font-weight:normal;">Compile Output</div>
<div class="t" style="left:799px;top:921.11px;font-size:13.4px;color:#f0f0f0;font-weight:normal;">9</div>
<div class="t" style="left:814px;top:921.11px;font-size:13.4px;color:#f0f0f0;font-weight:normal;">Test Results</div>
<div class="a" style="left:372px;top:921px;width:19px;height:13px;border-radius:7px;background:#8e8e8e"></div>
<div class="t" style="left:81.5px;width:600px;text-align:center;top:922.65px;font-size:11px;color:#ffffff;font-weight:bold;">2</div>
<svg class="a" style="left:907px;top:923px;" width="8" height="11" viewBox="0 0 8 11"><path d="M4 0 L8 4 L0 4Z M4 11 L8 7 L0 7Z" fill="#c8c8c8"/></svg>
<svg class="a" style="left:1345px;top:924px;" width="9" height="5" viewBox="0 0 9 5"><path d="M0 5 L4.5 0 L9 5Z" fill="#d0d0d0"/></svg>
<svg class="a" style="left:1369px;top:921px;" width="13" height="13" viewBox="0 0 13 13"><rect x="0.5" y="0.5" width="12" height="12" fill="#d8d8d8"/><rect x="2" y="2" width="5" height="9" fill="#404244"/></svg>
<div class="a" style="left:1071px;top:22px;width:1px;height:892px;background:#2f3032;"></div>
<div class="a" style="left:1072px;top:22px;width:327px;height:409px;background:#4b4c4e;"></div>
<div class="a" style="left:1072px;top:22px;width:327px;height:23px;background:#404244;"></div>
<div class="t" style="left:1083px;top:27.11px;font-size:13.4px;color:#ececec;font-weight:normal;">Properties</div>
<svg class="a" style="left:1263px;top:28px;" width="8" height="11" viewBox="0 0 8 11"><path d="M4 0 L8 4 L0 4Z M4 11 L8 7 L0 7Z" fill="#c8c8c8"/></svg>
<div class="a" style="left:1276px;top:26px;width:1px;height:17px;background:#5a5b5d;"></div>
<svg class="a" style="left:1353px;top:29px;" width="15" height="12" viewBox="0 0 15 12"><rect x="0.5" y="0.5" width="7" height="11" fill="none" stroke="#d0d0d0"/><line x1="0.5" y1="5.5" x2="7.5" y2="5.5" stroke="#d0d0d0"/><path d="M9 6.5 H14 M11.5 4 V9" stroke="#d0d0d0" stroke-width="1"/></svg>
<svg class="a" style="left:1380px;top:31px;" width="12" height="10" viewBox="0 0 12 10"><rect x="0.5" y="0.5" width="11" height="9" fill="none" stroke="#d0d0d0"/><rect x="0.5" y="0.5" width="11" height="2" fill="#d0d0d0"/><path d="M3.5 5 L8.5 5 L6 7.5Z" fill="#d0d0d0"/></svg>
<div class="a" style="left:1389px;top:46px;width:10px;height:385px;background:#48494b;"></div>
<div class="a" style="left:1389px;top:46px;width:10px;height:174px;background:#5d5e60;"></div>
<div class="a" style="left:1072px;top:45px;width:317px;height:18px;background:#3f4042;"></div>
<svg class="a" style="left:1076px;top:52px;" width="8" height="5" viewBox="0 0 8 5"><path d="M0 0 L8 0 L4.0 5Z" fill="#c8c8c8"/></svg>
<div class="t" style="left:1094px;top:47.44px;font-size:13.6px;color:#f4f4f4;font-weight:bold;">Type</div>
<div class="t" style="left:1080px;top:72.61px;font-size:13.4px;color:#ececec;font-weight:normal;">Type</div>
<div class="a" style="left:1175px;top:67px;width:188px;height:23px;background:#5a5b5d;border:1px solid #2c2d2f;"></div>
<div class="t" style="left:1191px;top:72.61px;font-size:13.4px;color:#ececec;font-weight:normal;">ListView</div>
<div class="t" style="left:1080px;top:100.61px;font-size:13.4px;color:#ececec;font-weight:normal;">id</div>
<div class="a" style="left:1175px;top:95px;width:188px;height:24px;background:#262729;"></div>
<div class="t" style="left:1191px;top:100.61px;font-size:13.4px;color:#f4f4f4;font-weight:normal;">clockview</div>
<svg class="a" style="left:1370px;top:101px;" width="13" height="14" viewBox="0 0 13 14"><rect x="0.5" y="0.5" width="12" height="13" fill="none" stroke="#c8c8c8"/><path d="M2.5 4H6 M2.5 6.5H6 M2.5 9H6" stroke="#c8c8c8" stroke-width="0.9"/></svg>
<div class="a" style="left:1072px;top:123px;width:317px;height:18px;background:#3f4042;"></div>
<svg class="a" style="left:1076px;top:130px;" width="8" height="5" viewBox="0 0 8 5"><path d="M0 0 L8 0 L4.0 5Z" fill="#c8c8c8"/></svg>
<div class="t" style="left:1094px;top:125.44px;font-size:13.6px;color:#f4f4f4;font-weight:bold;">Geometry</div>
<div class="t" style="left:1080px;top:150.61px;font-size:13.4px;color:#ececec;font-weight:normal;">Position</div>
<div class="t" style="left:1175px;top:150.61px;font-size:13.4px;color:#ececec;font-weight:normal;">X</div>
<div class="a" style="left:1191px;top:145px;width:64px;height:24px;background:#262729;"></div>
<svg class="a" style="left:1197px;top:154px;" width="6" height="6" viewBox="0 0 6 6"><circle cx="3" cy="3" r="2.2" fill="none" stroke="#c8c8c8" stroke-width="0.9"/></svg>
<div class="t" style="left:637px;width:600px;text-align:right;top:150.13px;font-size:14.2px;color:#f4f4f4;font-weight:normal;">0</div>
<svg class="a" style="left:1242px;top:150px;" width="9" height="14" viewBox="0 0 9 14"><path d="M4.5 0.5 L8.5 4.5 L0.5 4.5Z M4.5 13.5 L8.5 9.5 L0.5 9.5Z" fill="#c8c8c8"/></svg>
<div class="t" style="left:1267px;top:150.61px;font-size:13.4px;color:#ececec;font-weight:normal;">Y</div>
<div class="a" style="left:1283px;top:145px;width:64px;height:24px;background:#262729;"></div>
<svg class="a" style="left:1289px;top:154px;" width="6" height="6" viewBox="0 0 6 6"><circle cx="3" cy="3" r="2.2" fill="none" stroke="#c8c8c8" stroke-width="0.9"/></svg>
<div class="t" style="left:729px;width:600px;text-align:right;top:150.13px;font-size:14.2px;color:#f4f4f4;font-weight:normal;">0</div>
<svg class="a" style="left:1334px;top:150px;" width="9" height="14" viewBox="0 0 9 14"><path d="M4.5 0.5 L8.5 4.5 L0.5 4.5Z M4.5 13.5 L8.5 9.5 L0.5 9.5Z" fill="#c8c8c8"/></svg>
<div class="t" style="left:1080px;top:178.61px;font-size:13.4px;color:#ececec;font-weight:normal;">Size</div>
<div class="t" style="left:1175px;top:178.61px;font-size:13.4px;color:#ececec;font-weight:normal;">W</div>
<div class="a" style="left:1191px;top:173px;width:64px;height:24px;background:#262729;"></div>
<svg class="a" style="left:1197px;top:182px;" width="6" height="6" viewBox="0 0 6 6"><circle cx="3" cy="3" r="2.2" fill="none" stroke="#c8c8c8" stroke-width="0.9"/></svg>
<div class="t" style="left:637px;width:600px;text-align:right;top:178.13px;font-size:14.2px;color:#f4f4f4;font-weight:normal;">640</div>
<svg class="a" style="left:1242px;top:178px;" width="9" height="14" viewBox="0 0 9 14"><path d="M4.5 0.5 L8.5 4.5 L0.5 4.5Z M4.5 13.5 L8.5 9.5 L0.5 9.5Z" fill="#c8c8c8"/></svg>
<div class="t" style="left:1267px;top:178.61px;font-size:13.4px;color:#ececec;font-weight:normal;">H</div>
<div class="a" style="left:1283px;top:173px;width:64px;height:24px;background:#262729;"></div>
<svg class="a" style="left:1289px;top:182px;" width="6" height="6" viewBox="0 0 6 6"><circle cx="3" cy="3" r="2.2" fill="none" stroke="#c8c8c8" stroke-width="0.9"/></svg>
<div class="t" style="left:729px;width:600px;text-align:right;top:178.13px;font-size:14.2px;color:#f4f4f4;font-weight:normal;">320</div>
<svg class="a" style="left:1334px;top:178px;" width="9" height="14" viewBox="0 0 9 14"><path d="M4.5 0.5 L8.5 4.5 L0.5 4.5Z M4.5 13.5 L8.5 9.5 L0.5 9.5Z" fill="#c8c8c8"/></svg>
<div class="a" style="left:1072px;top:201px;width:317px;height:18px;background:#3f4042;"></div>
<svg class="a" style="left:1076px;top:208px;" width="8" height="5" viewBox="0 0 8 5"><path d="M0 0 L8 0 L4.0 5Z" fill="#c8c8c8"/></svg>
<div class="t" style="left:1094px;top:203.44px;font-size:13.6px;color:#f4f4f4;font-weight:bold;">Visibility</div>
<div class="t" style="left:1080px;top:224.61px;font-size:13.4px;color:#ececec;font-weight:normal;">Visibility</div>
<div class="a" style="left:1176px;top:224px;width:14px;height:14px;background:#2f3032;"></div>
<svg class="a" style="left:1177px;top:225px;" width="12" height="12" viewBox="0 0 12 12"><path d="M2.3 6.2 L4.8 10.5 L10.8 1.2" stroke="#d4d4d4" fill="none" stroke-width="1.9"/></svg>
<svg class="a" style="left:1200px;top:228px;" width="6" height="6" viewBox="0 0 6 6"><circle cx="3" cy="3" r="2.4" fill="none" stroke="#d0d0d0" stroke-width="1"/></svg>
<div class="t" style="left:1215px;top:224.61px;font-size:13.4px;color:#ececec;font-weight:normal;">Is Visible</div>
<div class="a" style="left:1288px;top:224px;width:14px;height:14px;background:#2f3032;"></div>
<svg class="a" style="left:1313px;top:228px;" width="6" height="6" viewBox="0 0 6 6"><circle cx="3" cy="3" r="2.4" fill="none" stroke="#d0d0d0" stroke-width="1"/></svg>
<div class="t" style="left:1327px;top:224.61px;font-size:13.4px;color:#ececec;font-weight:normal;">Clip</div>
<div class="t" style="left:1080px;top:248.61px;font-size:13.4px;color:#ececec;font-weight:normal;">Opacity</div>
<div class="a" style="left:1176px;top:243px;width:63px;height:24px;background:#262729;"></div>
<svg class="a" style="left:1180px;top:252px;" width="6" height="6" viewBox="0 0 6 6"><circle cx="3" cy="3" r="2.4" fill="none" stroke="#d0d0d0" stroke-width="1"/></svg>
<div class="t" style="left:1195px;top:249.11px;font-size:13.4px;color:#f0f0f0;font-weight:normal;">1.00</div>
<svg class="a" style="left:1225px;top:248px;" width="9" height="14" viewBox="0 0 9 14"><path d="M4.5 0.5 L8.5 4.5 L0.5 4.5Z M4.5 13.5 L8.5 9.5 L0.5 9.5Z" fill="#c8c8c8"/></svg>
<div class="a" style="left:1072px;top:275px;width:317px;height:24px;background:#404244;"></div>
<div class="a" style="left:1072px;top:275px;width:111px;height:24px;background:#ffffff;"></div>
<div class="a" style="left:1072px;top:299px;width:317px;height:4px;background:#ffffff;"></div>
<div class="t" style="left:827.5px;width:600px;text-align:center;top:281.78px;font-size:13.2px;color:#2e2e2e;font-weight:bold;">ListView</div>
<div class="t" style="left:938px;width:600px;text-align:center;top:281.78px;font-size:13.2px;color:#f4f4f4;font-weight:bold;">Layout</div>
<div class="t" style="left:1048px;width:600px;text-align:center;top:281.78px;font-size:13.2px;color:#f4f4f4;font-weight:bold;">Advanced</div>
<div class="a" style="left:1072px;top:303px;width:317px;height:18px;background:#3f4042;"></div>
<svg class="a" style="left:1076px;top:310px;" width="8" height="5" viewBox="0 0 8 5"><path d="M0 0 L8 0 L4.0 5Z" fill="#c8c8c8"/></svg>
<div class="t" style="left:1094px;top:305.44px;font-size:13.6px;color:#f4f4f4;font-weight:bold;">Flickable</div>
<div class="t" style="left:1080px;top:330.61px;font-size:13.4px;color:#ececec;font-weight:normal;">Content size</div>
<div class="t" style="left:1175px;top:330.61px;font-size:13.4px;color:#ececec;font-weight:normal;">W</div>
<div class="a" style="left:1191px;top:325px;width:64px;height:24px;background:#262729;"></div>
<svg class="a" style="left:1196px;top:334px;" width="6" height="6" viewBox="0 0 6 6"><circle cx="3" cy="3" r="2.4" fill="none" stroke="#d0d0d0" stroke-width="1"/></svg>
<div class="t" style="left:1206px;top:330.61px;font-size:13.4px;color:#f0f0f0;font-weight:normal;">1493</div>
<svg class="a" style="left:1241px;top:330px;" width="9" height="14" viewBox="0 0 9 14"><path d="M4.5 0.5 L8.5 4.5 L0.5 4.5Z M4.5 13.5 L8.5 9.5 L0.5 9.5Z" fill="#c8c8c8"/></svg>
<div class="t" style="left:1259px;top:330.61px;font-size:13.4px;color:#ececec;font-weight:normal;">H</div>
<div class="a" style="left:1275px;top:325px;width:64px;height:24px;background:#262729;"></div>
<svg class="a" style="left:1281px;top:334px;" width="6" height="6" viewBox="0 0 6 6"><circle cx="3" cy="3" r="2.2" fill="none" stroke="#c8c8c8" stroke-width="0.9"/></svg>
<div class="t" style="left:721px;width:600px;text-align:right;top:330.13px;font-size:14.2px;color:#f4f4f4;font-weight:normal;">0</div>
<svg class="a" style="left:1326px;top:330px;" width="9" height="14" viewBox="0 0 9 14"><path d="M4.5 0.5 L8.5 4.5 L0.5 4.5Z M4.5 13.5 L8.5 9.5 L0.5 9.5Z" fill="#c8c8c8"/></svg>
<div class="t" style="left:1080px;top:358.61px;font-size:13.4px;color:#ececec;font-weight:normal;">Flick directi...</div>
<div class="a" style="left:1176px;top:353px;width:207px;height:24px;background:#5a5b5d;border:1px solid #2c2d2f;"></div>
<svg class="a" style="left:1181px;top:362px;" width="6" height="6" viewBox="0 0 6 6"><circle cx="3" cy="3" r="2.4" fill="none" stroke="#d0d0d0" stroke-width="1"/></svg>
<div class="t" style="left:1195px;top:358.61px;font-size:13.4px;color:#f0f0f0;font-weight:normal;">HorizontalFlick</div>
<svg class="a" style="left:1366px;top:363px;" width="9" height="5" viewBox="0 0 9 5"><path d="M0 0 L9 0 L4.5 5Z" fill="#d0d0d0"/></svg>
<div class="t" style="left:1080px;top:386.61px;font-size:13.4px;color:#ececec;font-weight:normal;">Behavior</div>
<div class="a" style="left:1176px;top:381px;width:207px;height:24px;background:#5a5b5d;border:1px solid #2c2d2f;"></div>
<svg class="a" style="left:1181px;top:390px;" width="6" height="6" viewBox="0 0 6 6"><circle cx="3" cy="3" r="2.4" fill="none" stroke="#d0d0d0" stroke-width="1"/></svg>
<div class="t" style="left:1195px;top:386.61px;font-size:13.4px;color:#f0f0f0;font-weight:normal;">DragAndOvershootBounds</div>
<svg class="a" style="left:1366px;top:391px;" width="9" height="5" viewBox="0 0 9 5"><path d="M0 0 L9 0 L4.5 5Z" fill="#d0d0d0"/></svg>
<div class="t" style="left:1080px;top:410.61px;font-size:13.4px;color:#ececec;font-weight:normal;">Interactive</div>
<div class="a" style="left:1176px;top:410px;width:14px;height:14px;background:#2f3032;"></div>
<svg class="a" style="left:1177px;top:411px;" width="12" height="12" viewBox="0 0 12 12"><path d="M2.3 6.2 L4.8 10.5 L10.8 1.2" stroke="#d4d4d4" fill="none" stroke-width="1.9"/></svg>
<svg class="a" style="left:1200px;top:414px;" width="6" height="6" viewBox="0 0 6 6"><circle cx="3" cy="3" r="2.4" fill="none" stroke="#d0d0d0" stroke-width="1"/></svg>
<div class="a" style="left:1176px;top:429px;width:63px;height:2px;background:#262729;"></div>
<div class="a" style="left:1072px;top:431px;width:327px;height:10px;background:#48494b;"></div>
<div class="a" style="left:1072px;top:431px;width:317px;height:10px;background:#5a5b5d;"></div>
<div class="a" style="left:1072px;top:441px;width:327px;height:473px;background:#4b4c4e;"></div>
<div class="a" style="left:1072px;top:441px;width:327px;height:25px;background:#404244;"></div>
<div class="t" style="left:1083px;top:446.61px;font-size:13.4px;color:#ececec;font-weight:normal;">Connections</div>
<svg class="a" style="left:1263px;top:448px;" width="8" height="11" viewBox="0 0 8 11"><path d="M4 0 L8 4 L0 4Z M4 11 L8 7 L0 7Z" fill="#c8c8c8"/></svg>
<div class="a" style="left:1276px;top:446px;width:1px;height:17px;background:#5a5b5d;"></div>
<svg class="a" style="left:1301px;top:448px;" width="12" height="12" viewBox="0 0 12 12"><path d="M6 0.5V11.5 M0.5 6H11.5" stroke="#e0e0e0" stroke-width="1.5"/></svg>
<svg class="a" style="left:1327px;top:453px;" width="12" height="2" viewBox="0 0 12 2"><path d="M0 1H12" stroke="#6a6a6a" stroke-width="1.5"/></svg>
<svg class="a" style="left:1353px;top:449px;" width="15" height="12" viewBox="0 0 15 12"><rect x="0.5" y="0.5" width="7" height="11" fill="none" stroke="#d0d0d0"/><line x1="0.5" y1="5.5" x2="7.5" y2="5.5" stroke="#d0d0d0"/><path d="M9 6.5 H14 M11.5 4 V9" stroke="#d0d0d0" stroke-width="1"/></svg>
<svg class="a" style="left:1380px;top:451px;" width="12" height="10" viewBox="0 0 12 10"><rect x="0.5" y="0.5" width="11" height="9" fill="none" stroke="#d0d0d0"/><rect x="0.5" y="0.5" width="11" height="2" fill="#d0d0d0"/><path d="M3.5 5 L8.5 5 L6 7.5Z" fill="#d0d0d0"/></svg>
<div class="a" style="left:1072px;top:466px;width:327px;height:22px;background:#404244;"></div>
<div class="a" style="left:1072px;top:466px;width:88px;height:22px;background:#ffffff;"></div>
<div class="a" style="left:1072px;top:488px;width:327px;height:4px;background:#ffffff;"></div>
<div class="t" style="left:1081px;top:471.14px;font-size:11.6px;color:#2e2e2e;font-weight:bold;">Connections</div>
<div class="t" style="left:1180px;top:471.14px;font-size:11.6px;color:#f4f4f4;font-weight:bold;">Bindings</div>
<div class="t" style="left:1263px;top:471.14px;font-size:11.6px;color:#f4f4f4;font-weight:bold;">Properties</div>
<div class="a" style="left:1352px;top:466px;width:16px;height:22px;overflow:hidden"><div class="t" style="left:0;top:471px;font-size:11.6px;font-weight:bold;color:#f4f4f4;top:5.1px">Bac</div></div>
<div class="a" style="left:1368px;top:466px;width:15px;height:22px;background:#4e4f51;border:1px solid #3a3b3d;"></div>
<div class="a" style="left:1383px;top:466px;width:16px;height:22px;background:#4e4f51;border:1px solid #3a3b3d;"></div>
<svg class="a" style="left:1372px;top:472px;" width="6" height="10" viewBox="0 0 6 10"><path d="M6 0 L0 5 L6 10Z" fill="#6a6a6a"/></svg>
<svg class="a" style="left:1388px;top:472px;" width="6" height="10" viewBox="0 0 6 10"><path d="M0 0 L6 5 L0 10Z" fill="#111"/></svg>
<div class="a" style="left:1074px;top:494px;width:76px;height:23px;background:#4e4f51;border:1px solid #111;"></div>
<div class="t" style="left:812.0px;width:600px;text-align:center;top:500.47px;font-size:11.8px;color:#d4d4d4;font-weight:normal;">Target</div>
<div class="a" style="left:1154px;top:494px;width:156px;height:23px;background:#4e4f51;border:1px solid #111;"></div>
<div class="t" style="left:932.0px;width:600px;text-align:center;top:500.47px;font-size:11.8px;color:#d4d4d4;font-weight:normal;">Signal Handler</div>
<div class="a" style="left:1314px;top:494px;width:160px;height:23px;background:#4e4f51;border:1px solid #111;"></div>
<div class="t" style="left:1094.0px;width:600px;text-align:center;top:500.47px;font-size:11.8px;color:#d4d4d4;font-weight:normal;">Action</div>
<div class="a" style="left:1072px;top:904px;width:317px;height:10px;background:#47484a;"></div>
<div class="a" style="left:1072px;top:904px;width:222px;height:10px;background:#5b5c5e;"></div>
</body></html>
